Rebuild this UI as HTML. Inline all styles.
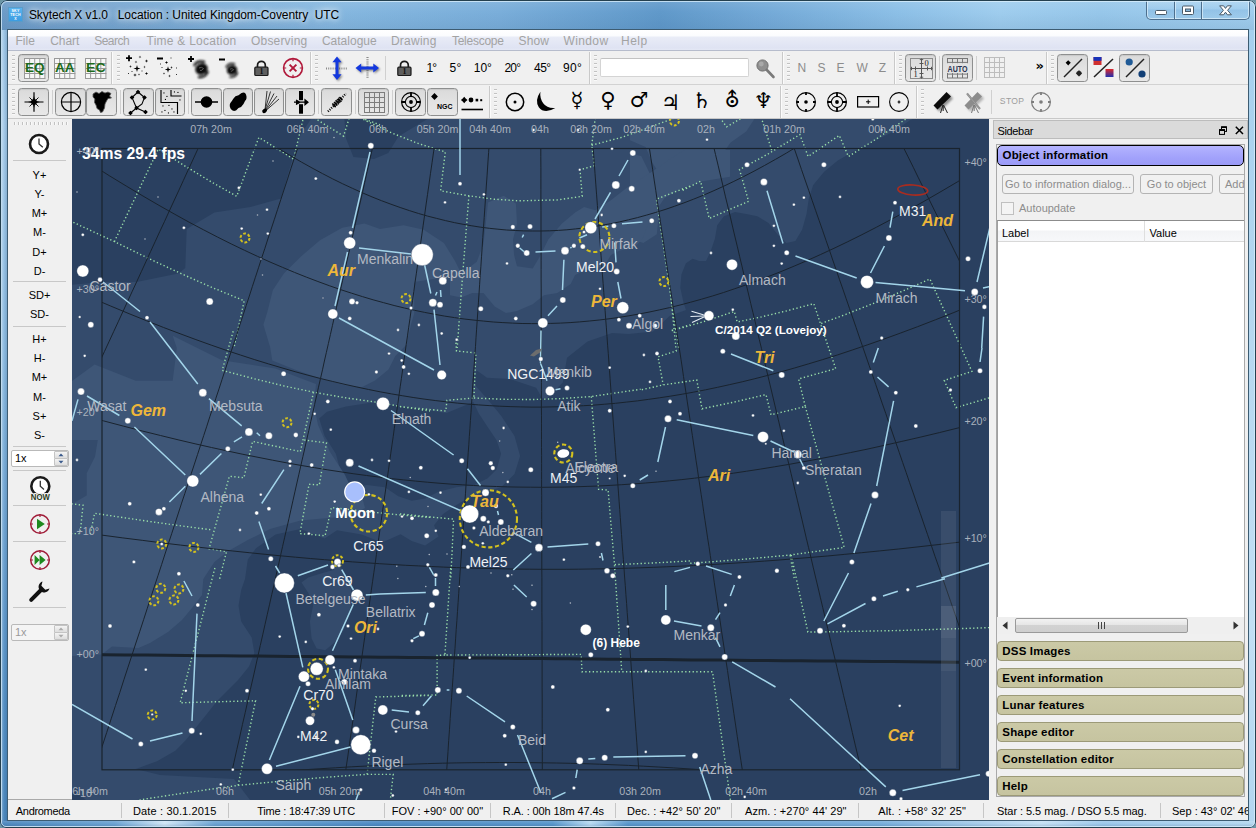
<!DOCTYPE html>
<html><head><meta charset="utf-8"><title>Skytech X v1.0</title>
<style>
*{box-sizing:border-box;margin:0;padding:0}
html,body{width:1256px;height:828px;overflow:hidden;background:#6b95a4}
body{font-family:"Liberation Sans",sans-serif;font-size:11px;color:#000;position:relative}
.abs{position:absolute}
#win{position:absolute;left:0;top:0;width:1256px;height:828px;border-radius:7px 7px 6px 6px;overflow:hidden;
 background:linear-gradient(90deg,#6c9bc7 0px,#77a7d1 120px,#86b8e0 330px,#7aaeda 500px,#6099ca 660px,#73a9d7 760px,#8dc0e7 900px,#9fcdee 1000px,#97c7ea 1100px,#a1ceee 1256px);}
#win:before{content:"";position:absolute;left:0;top:0;right:0;bottom:0;border:1px solid #24404f;border-radius:7px 7px 6px 6px;z-index:50;pointer-events:none}
#win:after{content:"";position:absolute;left:1px;top:1px;right:1px;bottom:1px;border:1px solid rgba(220,240,252,.75);border-radius:6px 6px 5px 5px;z-index:50;pointer-events:none}
#tshade{position:absolute;left:0;top:0;width:1256px;height:30px;background:linear-gradient(180deg,rgba(255,255,255,.10) 0,rgba(255,255,255,0) 12px,rgba(40,80,120,.10) 30px)}
#lframe{position:absolute;left:2px;top:30px;width:5px;height:792px;background:linear-gradient(90deg,rgba(255,255,255,.25) 0,rgba(255,255,255,0) 40%,rgba(20,60,100,.18) 100%),linear-gradient(180deg,#9ec6e6 0,#a6cbe9 12%,#8dbbe0 40%,#6ea3d1 65%,#5590c4 85%,#4c88bd 100%)}
#rframe{position:absolute;left:1249px;top:30px;width:5px;height:792px;background:linear-gradient(180deg,#a5d0ee 0,#b6d8f0 40%,#c2dff4 75%,#b2d6f0 100%)}
#bframe{position:absolute;left:2px;top:821px;width:1252px;height:5px;background:linear-gradient(180deg,rgba(255,255,255,.12) 0,rgba(255,255,255,0) 50%,rgba(10,40,80,.12) 100%),linear-gradient(90deg,#4f8abf 0,#6da4d3 9%,#cfe6f6 13%,#6da4d3 17%,#4f8cc4 30%,#5a98cc 44%,#b8daf2 47%,#5a98cc 50%,#78aedb 70%,#c4e0f4 83%,#9cc8ea 88%,#b5d8f0 100%)}
#client{position:absolute;left:7px;top:29px;width:1242px;height:792px;border:1px solid #3d5c72;background:#f0f0f0;overflow:hidden}
#cl{position:absolute;left:-8px;top:-30px;width:1256px;height:828px;}
#title{position:absolute;left:29px;top:5px;height:20px;width:400px;line-height:20px;font-size:12px;white-space:pre;color:#000;text-shadow:0 0 5px rgba(255,255,255,.9),0 0 9px rgba(255,255,255,.75),0 0 12px rgba(255,255,255,.5)}
#menubar{position:absolute;left:8px;top:30px;width:1240px;height:21px;background:linear-gradient(180deg,#ffffff 0,#fbfcfe 6px,#e9ecf7 7px,#dfe3f3 18px,#e4e8f5 20px);border-bottom:1px solid #b6bccc}
.mi{position:absolute;top:3px;height:16px;line-height:16px;font-size:12px;color:#a3a3a3;white-space:pre}
.tb{position:absolute;left:8px;width:1240px;background:#f0f0f0}
.grip{position:absolute;width:3px;background-image:repeating-linear-gradient(180deg,#bdbdbd 0,#bdbdbd 1.5px,#fafafa 1.5px,#fafafa 2.5px,transparent 2.5px,transparent 4px);opacity:.9}
.hgrip{position:absolute;height:3px;background-image:repeating-linear-gradient(90deg,#bdbdbd 0,#bdbdbd 1.5px,#fafafa 1.5px,#fafafa 2.5px,transparent 2.5px,transparent 4px);opacity:.9}
.vsep{position:absolute;width:1px;background:#c4c4c4}
.btn{position:absolute;border:1px solid #8e8f8f;border-radius:3.5px;background:linear-gradient(180deg,#dadada 0,#e2e2e2 50%,#e8e8e8 100%);box-shadow:inset 0 1px 1px rgba(0,0,0,.08)}
.ic{position:absolute;overflow:visible}
.deg{position:absolute;top:60px;font-size:12px;line-height:16px;color:#000;white-space:pre}
.dir{position:absolute;top:60px;font-size:12px;line-height:16px;color:#8c8c8c;white-space:pre}
.pl{position:absolute;font-family:"DejaVu Sans",sans-serif;color:#000;line-height:1;white-space:pre}
.lt{position:absolute;left:8px;width:63px;text-align:center;font-size:11px;line-height:13px;height:13px;color:#000;white-space:pre}
.hsep{position:absolute;left:13px;width:53px;height:1px;background:#c8c8c8}
.sbtab{position:absolute;left:997px;width:247px;height:20px;border:1px solid #9c9a78;border-radius:4px;background:linear-gradient(180deg,#cbc9a6,#c6c4a0);font-weight:bold;font-size:11.5px;letter-spacing:.18px;line-height:18px;padding-left:4.3px;white-space:pre;color:#000}
.sbtn{position:absolute;top:174px;height:20px;border:1px solid #b4b4b4;border-radius:3px;background:#f1f1f1;font-size:11px;line-height:18px;color:#8d8d8d;text-align:center;white-space:pre;overflow:hidden}
.st{position:absolute;top:802px;height:18px;line-height:18px;font-size:11px;color:#000;white-space:pre}
.ssep{position:absolute;top:803px;width:1px;height:15px;background:#c6c6c6}
</style></head>
<body>
<div id="win"><div id="tshade"></div><div id="lframe"></div><div id="rframe"></div><div id="bframe"></div>
<div class="abs" style="left:8px;top:7px;width:15px;height:15px;background:linear-gradient(180deg,#58b2ee,#3c9de2);border:1px solid #5a9cc8;overflow:hidden;text-align:center;color:#fff;font-weight:bold;font-size:3.6px;line-height:4.2px;padding-top:1px;letter-spacing:.2px">SKY<br>TECH<br>X</div>
<div id="title"><span id="cal-title" style="left:-0.1px;letter-spacing:-0.07px" class="abs">Skytech X v1.0   Location : United Kingdom-Coventry  UTC</span></div>
<div class="abs" style="left:1146px;top:0px;width:104px;height:20px;border:1px solid #4d6f8e;border-top:none;border-radius:0 0 5px 5px;background:linear-gradient(180deg,rgba(190,222,245,.55) 0,rgba(160,205,238,.35) 9px,rgba(130,180,222,.45) 10px,rgba(165,208,238,.5) 20px);box-shadow:inset 0 0 0 1px rgba(235,248,255,.6)"></div>
<div class="abs" style="left:1174px;top:1px;width:1px;height:18px;background:#4d6f8e"></div><div class="abs" style="left:1175px;top:1px;width:1px;height:18px;background:rgba(235,248,255,.6)"></div>
<div class="abs" style="left:1201px;top:1px;width:1px;height:18px;background:#4d6f8e"></div><div class="abs" style="left:1202px;top:1px;width:1px;height:18px;background:rgba(235,248,255,.6)"></div>
<svg class="ic" style="left:1150px;top:2px" width="100" height="16" viewBox="0 0 100 16"><rect x="5.5" y="8.5" width="11" height="4" rx="1" fill="#fff" stroke="#4a5a68" stroke-width="1"/><rect x="32.5" y="4" width="11" height="8.5" rx="1" fill="#fff" stroke="#4a5a68" stroke-width="1"/><rect x="35.5" y="7" width="5" height="2.5" fill="#86b4d8" stroke="#4a5a68" stroke-width="1"/><path d="M69.6 3.8 L73.6 3.8 L75.5 6.4 L77.4 3.8 L81.4 3.8 L77.6 8.3 L81.4 12.8 L77.4 12.8 L75.5 10.2 L73.6 12.8 L69.6 12.8 L73.4 8.3 Z" fill="#fff" stroke="#4a5a68" stroke-width="1" stroke-linejoin="round"/></svg>
<div id="client"><div id="cl">
<div id="menubar">
<span class="mi" id="cal-m0" style="left:7.4px;letter-spacing:0.033px">File</span>
<span class="mi" id="cal-m1" style="left:42.3px;letter-spacing:-0.1px">Chart</span>
<span class="mi" id="cal-m2" style="left:86.2px;letter-spacing:-0.52px">Search</span>
<span class="mi" id="cal-m3" style="left:138.5px;letter-spacing:0.25px">Time &amp; Location</span>
<span class="mi" id="cal-m4" style="left:243.0px;letter-spacing:0.188px">Observing</span>
<span class="mi" id="cal-m5" style="left:313.9px;letter-spacing:0.011px">Catalogue</span>
<span class="mi" id="cal-m6" style="left:382.9px;letter-spacing:0.25px">Drawing</span>
<span class="mi" id="cal-m7" style="left:443.9px;letter-spacing:-0.25px">Telescope</span>
<span class="mi" id="cal-m8" style="left:510.5px;letter-spacing:0.167px">Show</span>
<span class="mi" id="cal-m9" style="left:555.5px;letter-spacing:0.38px">Window</span>
<span class="mi" id="cal-m10" style="left:613.0px;letter-spacing:0.5px">Help</span>
</div>
<div class="tb" style="top:51px;height:34px;border-bottom:1px solid #d2d2d2"></div>
<div class="tb" style="top:85px;height:34px;border-bottom:1px solid #c8c8c8"></div><div class="grip" style="left:12px;top:55px;height:26px"></div>
<div class="btn" style="left:18px;top:54px;width:31px;height:28px"></div>
<svg class="ic" style="left:24px;top:58.2px" width="22" height="21" viewBox="0 0 22 21" ><rect x="0" y="0" width="21" height="20.5" fill="#f7f7f7"/><line x1="0.5" y1="0" x2="0.5" y2="20.5" stroke="#9a9a9a" stroke-width="1"/><line x1="0" y1="0.5" x2="21.4" y2="0.5" stroke="#9a9a9a" stroke-width="1"/><line x1="5.6" y1="0" x2="5.6" y2="20.5" stroke="#9a9a9a" stroke-width="1"/><line x1="0" y1="5.5" x2="21.4" y2="5.5" stroke="#9a9a9a" stroke-width="1"/><line x1="10.7" y1="0" x2="10.7" y2="20.5" stroke="#9a9a9a" stroke-width="1"/><line x1="0" y1="10.5" x2="21.4" y2="10.5" stroke="#9a9a9a" stroke-width="1"/><line x1="15.799999999999999" y1="0" x2="15.799999999999999" y2="20.5" stroke="#9a9a9a" stroke-width="1"/><line x1="0" y1="15.5" x2="21.4" y2="15.5" stroke="#9a9a9a" stroke-width="1"/><line x1="20.9" y1="0" x2="20.9" y2="20.5" stroke="#9a9a9a" stroke-width="1"/><line x1="0" y1="20.5" x2="21.4" y2="20.5" stroke="#9a9a9a" stroke-width="1"/><text x="10.8" y="14.3" text-anchor="middle" font-family="Liberation Sans, sans-serif" font-weight="bold" font-size="13.6" fill="#1c6b1c" textLength="19.6" lengthAdjust="spacingAndGlyphs">EQ</text></svg>
<svg class="ic" style="left:54px;top:58.2px" width="22" height="21" viewBox="0 0 22 21" ><rect x="0" y="0" width="21" height="20.5" fill="#f7f7f7"/><line x1="0.5" y1="0" x2="0.5" y2="20.5" stroke="#9a9a9a" stroke-width="1"/><line x1="0" y1="0.5" x2="21.4" y2="0.5" stroke="#9a9a9a" stroke-width="1"/><line x1="5.6" y1="0" x2="5.6" y2="20.5" stroke="#9a9a9a" stroke-width="1"/><line x1="0" y1="5.5" x2="21.4" y2="5.5" stroke="#9a9a9a" stroke-width="1"/><line x1="10.7" y1="0" x2="10.7" y2="20.5" stroke="#9a9a9a" stroke-width="1"/><line x1="0" y1="10.5" x2="21.4" y2="10.5" stroke="#9a9a9a" stroke-width="1"/><line x1="15.799999999999999" y1="0" x2="15.799999999999999" y2="20.5" stroke="#9a9a9a" stroke-width="1"/><line x1="0" y1="15.5" x2="21.4" y2="15.5" stroke="#9a9a9a" stroke-width="1"/><line x1="20.9" y1="0" x2="20.9" y2="20.5" stroke="#9a9a9a" stroke-width="1"/><line x1="0" y1="20.5" x2="21.4" y2="20.5" stroke="#9a9a9a" stroke-width="1"/><text x="10.8" y="14.3" text-anchor="middle" font-family="Liberation Sans, sans-serif" font-weight="bold" font-size="13.6" fill="#1c6b1c" textLength="19.6" lengthAdjust="spacingAndGlyphs">AA</text></svg>
<svg class="ic" style="left:85px;top:58.2px" width="22" height="21" viewBox="0 0 22 21" ><rect x="0" y="0" width="21" height="20.5" fill="#f7f7f7"/><line x1="0.5" y1="0" x2="0.5" y2="20.5" stroke="#9a9a9a" stroke-width="1"/><line x1="0" y1="0.5" x2="21.4" y2="0.5" stroke="#9a9a9a" stroke-width="1"/><line x1="5.6" y1="0" x2="5.6" y2="20.5" stroke="#9a9a9a" stroke-width="1"/><line x1="0" y1="5.5" x2="21.4" y2="5.5" stroke="#9a9a9a" stroke-width="1"/><line x1="10.7" y1="0" x2="10.7" y2="20.5" stroke="#9a9a9a" stroke-width="1"/><line x1="0" y1="10.5" x2="21.4" y2="10.5" stroke="#9a9a9a" stroke-width="1"/><line x1="15.799999999999999" y1="0" x2="15.799999999999999" y2="20.5" stroke="#9a9a9a" stroke-width="1"/><line x1="0" y1="15.5" x2="21.4" y2="15.5" stroke="#9a9a9a" stroke-width="1"/><line x1="20.9" y1="0" x2="20.9" y2="20.5" stroke="#9a9a9a" stroke-width="1"/><line x1="0" y1="20.5" x2="21.4" y2="20.5" stroke="#9a9a9a" stroke-width="1"/><text x="10.8" y="14.3" text-anchor="middle" font-family="Liberation Sans, sans-serif" font-weight="bold" font-size="13.6" fill="#1c6b1c" textLength="19.6" lengthAdjust="spacingAndGlyphs">EC</text></svg>
<div class="vsep" style="left:111px;top:52px;height:32px;background:#c9c9c9"></div><div class="vsep" style="left:112px;top:52px;height:32px;background:#fbfbfb"></div>
<div class="grip" style="left:117px;top:55px;height:26px"></div>
<svg class="ic" style="left:126px;top:55.3px" width="23" height="23" viewBox="0 0 23 23" ><path d="M0 3.2 H6 M3 0.2 V6.2" stroke="#000" stroke-width="1.8"/><path d="M14 0.3999999999999999 L14.352 1.648 L15.6 2 L14.352 2.352 L14 3.6 L13.648 2.352 L12.4 2 L13.648 1.648 Z" fill="#000"/><path d="M10 5.4 L10.352 6.648 L11.6 7 L10.352 7.352 L10 8.6 L9.648 7.352 L8.4 7 L9.648 6.648 Z" fill="#000"/><path d="M20.5 4.2 L20.896 5.604 L22.3 6 L20.896 6.396 L20.5 7.8 L20.104 6.396 L18.7 6 L20.104 5.604 Z" fill="#000"/><path d="M4.5 9.9 L4.852 11.148 L6.1 11.5 L4.852 11.852 L4.5 13.1 L4.148 11.852 L2.9 11.5 L4.148 11.148 Z" fill="#000"/><path d="M11 9.9 L11.792 12.708 L14.6 13.5 L11.792 14.292 L11 17.1 L10.208 14.292 L7.4 13.5 L10.208 12.708 Z" fill="#000"/><path d="M18.5 10.6 L18.808 11.692 L19.9 12 L18.808 12.308 L18.5 13.4 L18.192 12.308 L17.1 12 L18.192 11.692 Z" fill="#000"/><path d="M9 18.2 L9.396 19.604 L10.8 20 L9.396 20.396 L9 21.8 L8.604 20.396 L7.2 20 L8.604 19.604 Z" fill="#000"/><path d="M20.5 16.7 L20.896 18.104 L22.3 18.5 L20.896 18.896 L20.5 20.3 L20.104 18.896 L18.7 18.5 L20.104 18.104 Z" fill="#000"/><path d="M13 18.3 L13.264 19.236 L14.2 19.5 L13.264 19.764 L13 20.7 L12.736 19.764 L11.8 19.5 L12.736 19.236 Z" fill="#000"/><rect x="2.0" y="18.0" width="1" height="1" fill="#333"/><rect x="15.5" y="15.5" width="1" height="1" fill="#333"/><rect x="5.5" y="16.0" width="1" height="1" fill="#333"/></svg>
<svg class="ic" style="left:157px;top:56px" width="23" height="23" viewBox="0 0 23 23" ><path d="M0 2.5 H6" stroke="#000" stroke-width="1.8"/><path d="M9.5 4.7 L9.896 6.104 L11.3 6.5 L9.896 6.896 L9.5 8.3 L9.104 6.896 L7.7 6.5 L9.104 6.104 Z" fill="#000"/><path d="M11 10.3 L11.704 12.796 L14.2 13.5 L11.704 14.204 L11 16.7 L10.296 14.204 L7.8 13.5 L10.296 12.796 Z" fill="#000"/><path d="M14.5 10.0 L14.83 11.17 L16.0 11.5 L14.83 11.83 L14.5 13.0 L14.17 11.83 L13.0 11.5 L14.17 11.17 Z" fill="#000"/><path d="M7 16.2 L7.286 17.214 L8.3 17.5 L7.286 17.786 L7 18.8 L6.714 17.786 L5.7 17.5 L6.714 17.214 Z" fill="#000"/><path d="M12.5 18.4 L12.852 19.648 L14.1 20 L12.852 20.352 L12.5 21.6 L12.148 20.352 L10.9 20 L12.148 19.648 Z" fill="#000"/><rect x="13.5" y="1.5" width="1" height="1" fill="#333"/><rect x="4.5" y="11.0" width="1" height="1" fill="#333"/><rect x="19.0" y="11.5" width="1" height="1" fill="#333"/><rect x="19.0" y="18.0" width="1" height="1" fill="#333"/><rect x="3.0" y="7.5" width="1" height="1" fill="#333"/></svg>
<svg class="ic" style="left:188px;top:56px" width="23" height="23" viewBox="0 0 23 23" ><defs><filter id="gbp" x="-50%" y="-50%" width="200%" height="200%"><feGaussianBlur stdDeviation="0.9"/></filter></defs><path d="M0 3 H6 M3 0 V6" stroke="#000" stroke-width="1.8"/><g filter="url(#gbp)"><ellipse cx="13.5" cy="13" rx="6.4" ry="5.6" fill="#0a0a0a" transform="rotate(-25 13.5 13)"/><path d="M6 10 Q9 3.5 17 6" stroke="#111" stroke-width="2.2" fill="none"/><path d="M20 15 Q18 22 10 21" stroke="#111" stroke-width="2.2" fill="none"/></g><path d="M11 12 Q13.5 10.5 15.5 12.5 Q14 15 12 14.5" stroke="#666" stroke-width="1" fill="none" opacity=".8"/></svg>
<svg class="ic" style="left:218.5px;top:56.5px" width="23" height="23" viewBox="0 0 23 23" ><defs><filter id="gbm" x="-50%" y="-50%" width="200%" height="200%"><feGaussianBlur stdDeviation="0.9"/></filter></defs><path d="M0 2.5 H6" stroke="#000" stroke-width="1.8"/><g filter="url(#gbm)"><ellipse cx="13" cy="13" rx="5.3" ry="4.7" fill="#0a0a0a" transform="rotate(-25 13 13)"/><path d="M7 10.5 Q10 5 16 7.2" stroke="#111" stroke-width="1.8" fill="none"/><path d="M18.5 15 Q17 20.5 10.5 19.8" stroke="#111" stroke-width="1.8" fill="none"/></g><path d="M11 12.2 Q13 11 14.6 12.6 Q13.4 14.6 11.8 14.2" stroke="#666" stroke-width="1" fill="none" opacity=".8"/></svg>
<svg class="ic" style="left:254.3px;top:59.7px" width="15" height="16" viewBox="0 0 15 16" ><path d="M3.5 7.5 V5.2 A3.9 3.9 0 0 1 11.3 5.2 V7.5" fill="none" stroke="#1a1a1a" stroke-width="1.7"/><rect x="0.8" y="7.2" width="13.2" height="8.3" rx="1" fill="#5f5f5f" stroke="#1a1a1a" stroke-width="1.2"/><text x="7.4" y="14.4" text-anchor="middle" font-family="Liberation Serif, serif" font-weight="bold" font-size="8" fill="#111">1</text></svg>
<svg class="ic" style="left:281.8px;top:57px" width="22" height="22" viewBox="0 0 22 22" ><circle cx="11" cy="11" r="9.4" fill="none" stroke="#b0183a" stroke-width="1.6"/><path d="M7.6 7.6 L14.4 14.4 M14.4 7.6 L7.6 14.4" stroke="#b0183a" stroke-width="1.9"/><path d="M11 2 V4.2 M11 17.8 V20 M2 11 H4.2 M17.8 11 H20" stroke="#b0183a" stroke-width="1.2"/></svg>
<div class="vsep" style="left:310px;top:52px;height:32px;background:#c9c9c9"></div><div class="vsep" style="left:311px;top:52px;height:32px;background:#fbfbfb"></div>
<div class="grip" style="left:315px;top:55px;height:26px"></div>
<svg class="ic" style="left:324.8px;top:56.2px" width="24" height="25" viewBox="0 0 24 25" ><defs><filter id="ash" x="-50%" y="-50%" width="200%" height="200%"><feGaussianBlur stdDeviation="0.8"/></filter></defs><path d="M1 12.5 H23" stroke="#8a8a8a" stroke-width="2.2" stroke-dasharray="1 1.2"/><path d="M12 0.5 L16.6 6.2 L13.5 6.2 L13.5 18.3 L16.6 18.3 L12 24 L7.4 18.3 L10.5 18.3 L10.5 6.2 L7.4 6.2 Z" fill="#000" opacity=".45" transform="translate(1.2 1.2)" filter="url(#ash)"/><path d="M12 0.5 L16.6 6.2 L13.5 6.2 L13.5 18.3 L16.6 18.3 L12 24 L7.4 18.3 L10.5 18.3 L10.5 6.2 L7.4 6.2 Z" fill="#1338de"/></svg>
<svg class="ic" style="left:355.2px;top:55.8px" width="25" height="24" viewBox="0 0 25 24" ><path d="M12.5 1 V23" stroke="#8a8a8a" stroke-width="2.2" stroke-dasharray="1 1.2"/><path d="M0.5 12 L6.2 7.4 L6.2 10.5 L18.3 10.5 L18.3 7.4 L24 12 L18.3 16.6 L18.3 13.5 L6.2 13.5 L6.2 16.6 Z" fill="#000" opacity=".45" transform="translate(1.2 1.2)" filter="url(#ash)"/><path d="M0.5 12 L6.2 7.4 L6.2 10.5 L18.3 10.5 L18.3 7.4 L24 12 L18.3 16.6 L18.3 13.5 L6.2 13.5 L6.2 16.6 Z" fill="#1338de"/></svg>
<div class="vsep" style="left:385px;top:56px;height:24px;background:#d0d0d0"></div>
<svg class="ic" style="left:396.8px;top:59.9px" width="15" height="16" viewBox="0 0 15 16" ><path d="M3.5 7.5 V5.2 A3.9 3.9 0 0 1 11.3 5.2 V7.5" fill="none" stroke="#1a1a1a" stroke-width="1.7"/><rect x="0.8" y="7.2" width="13.2" height="8.3" rx="1" fill="#5f5f5f" stroke="#1a1a1a" stroke-width="1.2"/><text x="7.4" y="14.4" text-anchor="middle" font-family="Liberation Serif, serif" font-weight="bold" font-size="8" fill="#111">1</text></svg>
<span class="deg" id="cal-d0" style="left:426.4px;letter-spacing:-0.8px">1°</span>
<span class="deg" id="cal-d1" style="left:449.4px;letter-spacing:0.5px">5°</span>
<span class="deg" id="cal-d2" style="left:473.8px;letter-spacing:-0.05px">10°</span>
<span class="deg" id="cal-d3" style="left:504.4px;letter-spacing:-0.8px">20°</span>
<span class="deg" id="cal-d4" style="left:534.0px;letter-spacing:-0.5px">45°</span>
<span class="deg" id="cal-d5" style="left:563.1px;letter-spacing:0.25px">90°</span>
<div class="vsep" style="left:589px;top:52px;height:32px;background:#c9c9c9"></div><div class="vsep" style="left:590px;top:52px;height:32px;background:#fbfbfb"></div>
<div class="grip" style="left:594px;top:55px;height:26px"></div>
<div class="abs" style="left:600px;top:58px;width:149px;height:19px;background:#fff;border:1px solid #d4d4d4;border-top-color:#c2c2c2;border-radius:2px"></div>
<svg class="ic" style="left:755.5px;top:58.5px" width="20" height="20" viewBox="0 0 20 20" ><defs><filter id="mgb"><feGaussianBlur stdDeviation="0.5"/></filter></defs><g filter="url(#mgb)"><path d="M9 9 L17.5 18" stroke="#7a7a7a" stroke-width="2.6" stroke-linecap="round"/><circle cx="6.5" cy="6.5" r="5.6" fill="#8f8f8f" stroke="#6e6e6e" stroke-width="1"/><circle cx="5.3" cy="5" r="2.4" fill="#a9a9a9"/></g></svg>
<div class="vsep" style="left:782px;top:52px;height:32px;background:#c9c9c9"></div><div class="vsep" style="left:783px;top:52px;height:32px;background:#fbfbfb"></div>
<div class="grip" style="left:787px;top:55px;height:26px"></div>
<span class="dir" id="cal-n0" style="left:797.4px;letter-spacing:0px">N</span>
<span class="dir" id="cal-n1" style="left:817.4px;letter-spacing:0px">S</span>
<span class="dir" id="cal-n2" style="left:836.6px;letter-spacing:0px">E</span>
<span class="dir" id="cal-n3" style="left:856.4px;letter-spacing:0px">W</span>
<span class="dir" id="cal-n4" style="left:878.8px;letter-spacing:0px">Z</span>
<div class="vsep" style="left:894px;top:52px;height:32px;background:#c9c9c9"></div><div class="vsep" style="left:895px;top:52px;height:32px;background:#fbfbfb"></div>
<div class="grip" style="left:899px;top:55px;height:26px"></div>
<div class="btn" style="left:905px;top:54px;width:31px;height:28px"></div>
<svg class="ic" style="left:909.5px;top:58px" width="23" height="21" viewBox="0 0 23 21" ><rect x="0.5" y="0.5" width="22" height="20" fill="none" stroke="#8c8c8c"/><path d="M11.5 0.5 V20.5 M0.5 10.5 H22.5" stroke="#555" stroke-width="1"/><path d="M9.5 5.5 H13.5 M9.5 15.5 H13.5 M5.5 8.5 V12.5 M17.5 8.5 V12.5 M1.5 8.8 V12.2 M21.5 8.8 V12.2 M9.8 19.2 H13.2 M9.8 1.6 H13.2" stroke="#555" stroke-width="1"/><text x="16.5" y="8.3" text-anchor="middle" font-family="Liberation Serif,serif" font-size="8.5" fill="#222">0</text><text x="5.6" y="19" text-anchor="middle" font-family="Liberation Serif,serif" font-size="8.5" fill="#222">1</text></svg>
<div class="vsep" style="left:938.5px;top:56px;height:24px;background:#d0d0d0"></div>
<div class="btn" style="left:942px;top:54px;width:31px;height:28px"></div>
<svg class="ic" style="left:947px;top:57.5px" width="21" height="21" viewBox="0 0 21 21" ><line x1="0.5" y1="0" x2="0.5" y2="20" stroke="#777" stroke-width="1"/><line x1="5.5" y1="0" x2="5.5" y2="20" stroke="#777" stroke-width="1"/><line x1="10.5" y1="0" x2="10.5" y2="20" stroke="#777" stroke-width="1"/><line x1="15.5" y1="0" x2="15.5" y2="20" stroke="#777" stroke-width="1"/><line x1="20.5" y1="0" x2="20.5" y2="20" stroke="#777" stroke-width="1"/><line x1="0" y1="0.5" x2="21" y2="0.5" stroke="#777" stroke-width="1"/><line x1="0" y1="4.4" x2="21" y2="4.4" stroke="#777" stroke-width="1"/><line x1="0" y1="8.3" x2="21" y2="8.3" stroke="#777" stroke-width="1"/><line x1="0" y1="12.2" x2="21" y2="12.2" stroke="#777" stroke-width="1"/><line x1="0" y1="16.1" x2="21" y2="16.1" stroke="#777" stroke-width="1"/><line x1="0" y1="20.0" x2="21" y2="20.0" stroke="#777" stroke-width="1"/><rect x="-1" y="5.2" width="23" height="9.8" fill="#e2e2e2"/><text x="10.5" y="13.6" text-anchor="middle" font-family="Liberation Sans,sans-serif" font-weight="bold" font-size="9.4" fill="#2a3350" textLength="20" lengthAdjust="spacingAndGlyphs">AUTO</text></svg>
<div class="vsep" style="left:975.5px;top:56px;height:24px;background:#d0d0d0"></div>
<svg class="ic" style="left:984px;top:57px" width="21" height="21" viewBox="0 0 21 21" ><line x1="0.5" y1="0" x2="0.5" y2="21" stroke="#bdbdbd" stroke-width="1"/><line x1="0" y1="0.5" x2="21" y2="0.5" stroke="#bdbdbd" stroke-width="1"/><line x1="5.5" y1="0" x2="5.5" y2="21" stroke="#bdbdbd" stroke-width="1"/><line x1="0" y1="5.5" x2="21" y2="5.5" stroke="#bdbdbd" stroke-width="1"/><line x1="10.5" y1="0" x2="10.5" y2="21" stroke="#bdbdbd" stroke-width="1"/><line x1="0" y1="10.5" x2="21" y2="10.5" stroke="#bdbdbd" stroke-width="1"/><line x1="15.5" y1="0" x2="15.5" y2="21" stroke="#bdbdbd" stroke-width="1"/><line x1="0" y1="15.5" x2="21" y2="15.5" stroke="#bdbdbd" stroke-width="1"/><line x1="20.5" y1="0" x2="20.5" y2="21" stroke="#bdbdbd" stroke-width="1"/><line x1="0" y1="20.5" x2="21" y2="20.5" stroke="#bdbdbd" stroke-width="1"/></svg>
<span class="abs" style="left:1035.5px;top:58px;font-size:15px;line-height:16px;font-weight:bold;color:#000;letter-spacing:-1px;font-family:DejaVu Sans,sans-serif;font-size:13px">»</span>
<div class="vsep" style="left:1046px;top:52px;height:32px;background:#c9c9c9"></div><div class="vsep" style="left:1047px;top:52px;height:32px;background:#fbfbfb"></div>
<div class="grip" style="left:1051px;top:55px;height:26px"></div>
<div class="btn" style="left:1057px;top:54px;width:31px;height:28px"></div>
<svg class="ic" style="left:1060.5px;top:56px" width="24" height="24" viewBox="0 0 24 24" ><path d="M3 21 L21 3" stroke="#222" stroke-width="1.5"/><path d="M7.2 4.199999999999999 L8.5 5.5 L9.8 6.8 L8.5 8.1 L7.2 9.4 L5.9 8.1 L4.6 6.8 L5.9 5.5 Z" fill="#000"/><defs><filter id="dsb"><feGaussianBlur stdDeviation="0.5"/></filter></defs><g filter="url(#dsb)"><path d="M18 14.200000000000001 L19.705000000000002 15.595 L21.1 17.3 L19.705000000000002 19.005000000000003 L18 20.400000000000002 L16.294999999999998 19.005000000000003 L14.9 17.3 L16.294999999999998 15.595 Z" fill="#222"/></g></svg>
<svg class="ic" style="left:1092.5px;top:56px" width="22" height="24" viewBox="0 0 22 24" ><path d="M1 21 L20 3" stroke="#222" stroke-width="1.5"/><rect x="0.5" y="1" width="8" height="8" fill="#d03030"/><rect x="0.5" y="1" width="8" height="3.8" fill="#1832b8"/><defs><linearGradient id="rbg" x1="0" y1="0" x2="0" y2="1"><stop offset="0" stop-color="#e02828"/><stop offset="1" stop-color="#2030b0"/></linearGradient></defs><rect x="12.5" y="13" width="8" height="8" fill="url(#rbg)"/></svg>
<div class="btn" style="left:1119px;top:54px;width:31px;height:28px"></div>
<svg class="ic" style="left:1122.5px;top:56px" width="24" height="24" viewBox="0 0 24 24" ><path d="M3 21 L21 3" stroke="#222" stroke-width="1.5"/><circle cx="6.2" cy="6" r="3.6" fill="#1f5a96"/><circle cx="19" cy="18" r="3.6" fill="#123f76"/></svg>
<div class="grip" style="left:12px;top:89px;height:26px"></div>
<div class="btn" style="left:18px;top:88px;width:31px;height:28px"></div>
<svg class="ic" style="left:22.5px;top:91px" width="22" height="22" viewBox="0 0 22 22" ><path d="M11 1.2 V20.8 M1.5 11 H20.5" stroke="#000" stroke-width="1.2"/><path d="M6.5 6.5 L15.5 15.5 M15.5 6.5 L6.5 15.5" stroke="#000" stroke-width="0.9"/><path d="M11 5 L12.32 9.68 L17 11 L12.32 12.32 L11 17 L9.68 12.32 L5 11 L9.68 9.68 Z" fill="#000"/><circle cx="11" cy="11" r="2.9" fill="#000"/></svg>
<div class="vsep" style="left:51.5px;top:90px;height:24px;background:#d0d0d0"></div>
<div class="btn" style="left:55px;top:88px;width:31px;height:28px"></div>
<svg class="ic" style="left:59.5px;top:91px" width="22" height="22" viewBox="0 0 22 22" ><circle cx="11" cy="11" r="9.6" fill="none" stroke="#000" stroke-width="1.2"/><path d="M11 1 V21 M1 11 H21" stroke="#000" stroke-width="1.2"/></svg>
<div class="btn" style="left:86px;top:88px;width:31px;height:28px"></div>
<svg class="ic" style="left:90px;top:90px" width="23" height="24" viewBox="0 0 23 24" ><path d="M3 4 L6 2 L9 3.5 L12 1.5 L15 3 L18 2 L21 3.5 L19.5 6 L21.5 8 L18 8.5 L16.5 11 L15 14 L14.5 18 L12.5 22 L10.5 22.5 L9.5 20 L7 18.5 L6 15 L4.5 12.5 L4.8 9 L3 7 Z" fill="#000" stroke="#555" stroke-width="0.8"/></svg>
<div class="vsep" style="left:120px;top:90px;height:24px;background:#d0d0d0"></div>
<div class="btn" style="left:123px;top:88px;width:30.5px;height:28px"></div>
<svg class="ic" style="left:129px;top:89.5px" width="19" height="25" viewBox="0 0 19 25" ><path d="M9 2 L15.5 7.5 L13 14 L7.5 18 L1.5 23 M9 2 L3 7.5 L7.5 18 L16.5 22" fill="none" stroke="#000" stroke-width="1.05"/><path d="M9 -0.2999999999999998 L10.15 0.8500000000000001 L11.3 2 L10.15 3.15 L9 4.3 L7.85 3.15 L6.7 2 L7.85 0.8500000000000001 Z" fill="#000"/><path d="M15.5 5.2 L16.65 6.35 L17.8 7.5 L16.65 8.65 L15.5 9.8 L14.35 8.65 L13.2 7.5 L14.35 6.35 Z" fill="#000"/><path d="M3 5.2 L4.15 6.35 L5.3 7.5 L4.15 8.65 L3 9.8 L1.85 8.65 L0.7000000000000002 7.5 L1.85 6.35 Z" fill="#000"/><path d="M7.5 15.7 L8.65 16.85 L9.8 18 L8.65 19.15 L7.5 20.3 L6.35 19.15 L5.2 18 L6.35 16.85 Z" fill="#000"/><path d="M1.5 20.7 L2.65 21.85 L3.8 23 L2.65 24.15 L1.5 25.3 L0.3500000000000001 24.15 L-0.7999999999999998 23 L0.3500000000000001 21.85 Z" fill="#000"/><path d="M16.5 19.7 L17.65 20.85 L18.8 22 L17.65 23.15 L16.5 24.3 L15.35 23.15 L14.2 22 L15.35 20.85 Z" fill="#000"/></svg>
<div class="btn" style="left:154.5px;top:88px;width:30.5px;height:28px"></div>
<svg class="ic" style="left:159.5px;top:90px" width="22" height="24" viewBox="0 0 22 24" ><path d="M1 0 V12.5 H17.5 V24 M11 0 V6 H21.5" fill="none" stroke="#000" stroke-width="1.15"/><rect x="3.4" y="2.4" width="1.1" height="1.1" fill="#000"/><rect x="6.4" y="5.9" width="1.1" height="1.1" fill="#000"/><rect x="4.9" y="8.9" width="1.1" height="1.1" fill="#000"/><rect x="13.9" y="1.4" width="1.1" height="1.1" fill="#000"/><rect x="17.4" y="1.9" width="1.1" height="1.1" fill="#000"/><rect x="19.4" y="9.4" width="1.1" height="1.1" fill="#000"/><rect x="2.4" y="15.4" width="1.1" height="1.1" fill="#000"/><rect x="8.4" y="14.9" width="1.1" height="1.1" fill="#000"/><rect x="11.4" y="18.4" width="1.1" height="1.1" fill="#000"/><rect x="4.4" y="19.9" width="1.1" height="1.1" fill="#000"/><rect x="13.4" y="21.4" width="1.1" height="1.1" fill="#000"/><rect x="7.9" y="22.4" width="1.1" height="1.1" fill="#000"/><rect x="1.4" y="21.4" width="1.1" height="1.1" fill="#000"/></svg>
<div class="vsep" style="left:188px;top:90px;height:24px;background:#d0d0d0"></div>
<div class="btn" style="left:191px;top:88px;width:30.5px;height:28px"></div>
<svg class="ic" style="left:195px;top:95px" width="23" height="14" viewBox="0 0 23 14" ><path d="M0 7 H23" stroke="#000" stroke-width="1.3"/><circle cx="11.5" cy="7" r="5.8" fill="#000"/></svg>
<div class="btn" style="left:222.5px;top:88px;width:30.5px;height:28px"></div>
<svg class="ic" style="left:228.8px;top:92.3px" width="19" height="20" viewBox="0 0 19 20" ><path d="M1.5 16.5 Q-0.5 12.5 2.5 9.5 L4.5 6.5 Q6 3.5 9.5 3.2 L12.5 1 Q16 -0.5 17 2.5 Q18.5 6.5 16 9 L14.5 12 Q12.5 15.5 9.5 16 L7 18.5 Q3.5 20 1.5 16.5 Z" fill="#000"/></svg>
<div class="btn" style="left:253.5px;top:88px;width:30.5px;height:28px"></div>
<svg class="ic" style="left:261px;top:91px" width="19" height="23" viewBox="0 0 19 23" ><path d="M4 19 L6 0 M4 19 L9.5 0.5 M4.5 19 L13 2.5 M5 19 L16 5 M5 19.5 L18 8" stroke="#222" stroke-width="0.9" fill="none"/><ellipse cx="3.6" cy="19.8" rx="2.6" ry="2" fill="#000" transform="rotate(-35 3.6 19.8)"/></svg>
<div class="btn" style="left:284.5px;top:88px;width:30.5px;height:28px"></div>
<svg class="ic" style="left:291.5px;top:91px" width="18" height="23" viewBox="0 0 18 23" ><rect x="7" y="0" width="4" height="9.2" fill="#000"/><rect x="7" y="13.2" width="4" height="9.5" fill="#000"/><path d="M2 11.2 H15.5 M4 9 L8 11.2 L4 13.5 M13 8.8 V13.8 L16 11.2 Z" stroke="#000" stroke-width="1.2" fill="#000"/></svg>
<div class="vsep" style="left:318px;top:90px;height:24px;background:#d0d0d0"></div>
<div class="btn" style="left:321px;top:88px;width:31px;height:28px"></div>
<svg class="ic" style="left:326.5px;top:91px" width="20" height="22" viewBox="0 0 20 22" ><defs><filter id="mwb"><feGaussianBlur stdDeviation="0.35"/></filter></defs><path d="M1 20.5 L19 2.5" stroke="#000" stroke-width="2.2" stroke-dasharray="1 1.3"/><g filter="url(#mwb)"><path d="M6.5 15 L14.5 7" stroke="#000" stroke-width="4.2" stroke-dasharray="1.6 0.8"/><path d="M8 16 L15.5 9 M5.5 13 L12.5 6.5" stroke="#000" stroke-width="1.2" stroke-dasharray="1 1"/></g></svg>
<div class="vsep" style="left:355px;top:90px;height:24px;background:#d0d0d0"></div>
<div class="btn" style="left:358px;top:88px;width:31px;height:28px"></div>
<svg class="ic" style="left:363.5px;top:92px" width="21" height="21" viewBox="0 0 21 21" ><line x1="0.5" y1="0" x2="0.5" y2="21" stroke="#7d7d7d" stroke-width="1"/><line x1="0" y1="0.5" x2="21" y2="0.5" stroke="#7d7d7d" stroke-width="1"/><line x1="5.5" y1="0" x2="5.5" y2="21" stroke="#7d7d7d" stroke-width="1"/><line x1="0" y1="5.5" x2="21" y2="5.5" stroke="#7d7d7d" stroke-width="1"/><line x1="10.5" y1="0" x2="10.5" y2="21" stroke="#7d7d7d" stroke-width="1"/><line x1="0" y1="10.5" x2="21" y2="10.5" stroke="#7d7d7d" stroke-width="1"/><line x1="15.5" y1="0" x2="15.5" y2="21" stroke="#7d7d7d" stroke-width="1"/><line x1="0" y1="15.5" x2="21" y2="15.5" stroke="#7d7d7d" stroke-width="1"/><line x1="20.5" y1="0" x2="20.5" y2="21" stroke="#7d7d7d" stroke-width="1"/><line x1="0" y1="20.5" x2="21" y2="20.5" stroke="#7d7d7d" stroke-width="1"/></svg>
<div class="vsep" style="left:392px;top:90px;height:24px;background:#d0d0d0"></div>
<div class="btn" style="left:395px;top:88px;width:31px;height:28px"></div>
<svg class="ic" style="left:399.5px;top:91px" width="22" height="22" viewBox="0 0 22 22" ><circle cx="11" cy="11" r="9.4" fill="none" stroke="#000" stroke-width="1.2"/><circle cx="11" cy="11" r="5.6" fill="none" stroke="#000" stroke-width="1.1"/><circle cx="11" cy="11" r="1.9" fill="#000"/><path d="M11 1.5 V5 M11 17 V20.5 M1.5 11 H5 M17 11 H20.5" stroke="#000" stroke-width="1.8"/></svg>
<div class="btn" style="left:426.5px;top:88px;width:31px;height:28px"></div>
<svg class="ic" style="left:430.5px;top:93px" width="23" height="17" viewBox="0 0 23 17" ><path d="M3.5 0.10000000000000009 L5.2 1.8 L6.9 3.5 L5.2 5.2 L3.5 6.9 L1.8 5.2 L0.10000000000000009 3.5 L1.8 1.8 Z" fill="#000"/><text x="6" y="15.5" font-family="Liberation Sans,sans-serif" font-weight="bold" font-size="7.6" fill="#000" textLength="15.5" lengthAdjust="spacingAndGlyphs">NGC</text></svg>
<svg class="ic" style="left:460.5px;top:95.5px" width="23" height="16" viewBox="0 0 23 16" ><path d="M3.2 0.7000000000000002 L4.6850000000000005 2.515 L6.5 4 L4.6850000000000005 5.484999999999999 L3.2 7.3 L1.7150000000000003 5.484999999999999 L-0.09999999999999964 4 L1.7150000000000003 2.515 Z" fill="#000"/><circle cx="10" cy="4" r="2.4" fill="#000"/><rect x="14.6" y="2.8" width="2.6" height="2.6" fill="#000"/><rect x="19.2" y="3.2" width="2" height="2" fill="#000"/><path d="M0.5 13.5 H22" stroke="#000" stroke-width="1.6"/></svg>
<div class="vsep" style="left:489px;top:86px;height:32px;background:#c9c9c9"></div><div class="vsep" style="left:490px;top:86px;height:32px;background:#fbfbfb"></div>
<div class="grip" style="left:494px;top:89px;height:26px"></div>
<svg class="ic" style="left:505.4px;top:91.8px" width="20" height="20" viewBox="0 0 20 20" ><circle cx="10" cy="10" r="8.7" fill="none" stroke="#000" stroke-width="1.5"/><circle cx="10" cy="10" r="1.5" fill="#000"/></svg>
<svg class="ic" style="left:535px;top:91px" width="22" height="22" viewBox="0 0 22 22" ><path d="M5.4 0.8 Q-0.5 9.5 3.8 16.2 Q9.5 23.5 20.3 17 Q12.2 17.8 8.2 12.3 Q4.6 7.2 5.4 0.8 Z" fill="#000"/></svg>
<span class="pl" style="left:562px;top:89.7px;width:30px;text-align:center;font-size:21px">☿</span>
<span class="pl" style="left:592.9px;top:89.7px;width:30px;text-align:center;font-size:21px">♀</span>
<span class="pl" style="left:623.8px;top:89.9px;width:30px;text-align:center;font-size:21px">♂</span>
<span class="pl" style="left:655.6px;top:91.7px;width:30px;text-align:center;font-size:21.5px">♃</span>
<span class="pl" style="left:686.7px;top:89.7px;width:30px;text-align:center;font-size:21.5px">♄</span>
<span class="pl" style="left:717.2px;top:89.7px;width:30px;text-align:center;font-size:21px">⛢</span>
<span class="pl" style="left:748.5px;top:89.7px;width:30px;text-align:center;font-size:21.5px">♆</span>
<div class="vsep" style="left:780px;top:86px;height:32px;background:#c9c9c9"></div><div class="vsep" style="left:781px;top:86px;height:32px;background:#fbfbfb"></div>
<div class="grip" style="left:785px;top:89px;height:26px"></div>
<svg class="ic" style="left:795.2px;top:90.8px" width="22" height="22" viewBox="0 0 22 22" ><circle cx="11" cy="11" r="9.4" fill="none" stroke="#000" stroke-width="1.2"/><circle cx="11" cy="11" r="1.8" fill="#000"/><path d="M11 1.5 V4 M11 18 V20.5 M1.5 11 H4 M18 11 H20.5" stroke="#000" stroke-width="1.8"/></svg>
<svg class="ic" style="left:826.2px;top:90.8px" width="22" height="22" viewBox="0 0 22 22" ><circle cx="11" cy="11" r="9.4" fill="none" stroke="#000" stroke-width="1.2"/><circle cx="11" cy="11" r="5.6" fill="none" stroke="#000" stroke-width="1.1"/><circle cx="11" cy="11" r="1.9" fill="#000"/><path d="M11 1.5 V5 M11 17 V20.5 M1.5 11 H5 M17 11 H20.5" stroke="#000" stroke-width="1.8"/></svg>
<svg class="ic" style="left:857px;top:95.5px" width="23" height="12" viewBox="0 0 23 12" ><rect x="0.6" y="0.6" width="21" height="10.4" fill="none" stroke="#000" stroke-width="1.2"/><path d="M9 5.8 H13.4 M11.2 3.6 V8" stroke="#000" stroke-width="1"/></svg>
<svg class="ic" style="left:888px;top:90.8px" width="22" height="22" viewBox="0 0 22 22" ><circle cx="11" cy="11" r="9.4" fill="none" stroke="#000" stroke-width="1.1"/><path d="M9.6 11 H12.4 M11 9.6 V12.4" stroke="#000" stroke-width="1.1"/></svg>
<div class="vsep" style="left:916px;top:86px;height:32px;background:#c9c9c9"></div><div class="vsep" style="left:917px;top:86px;height:32px;background:#fbfbfb"></div>
<div class="grip" style="left:921px;top:89px;height:26px"></div>
<svg class="ic" style="left:931.5px;top:90.7px" width="22" height="23" viewBox="0 0 22 23" ><defs><filter id="scb0" x="-30%" y="-30%" width="160%" height="160%"><feGaussianBlur stdDeviation="0.9"/></filter></defs><path d="M2 15 L15 1.5 L19.5 6 L6 19 Z" fill="#000" opacity="0.4" transform="translate(1.5 1.5)" filter="url(#scb0)"/><path d="M11 14 L8.5 22 M11.5 14 L15.5 22 M11.2 14 V20" stroke="#222" stroke-width="1"/><path d="M1.5 14.5 L14.5 1 L19 5.5 L5.5 18.5 Z" fill="#0c0c0c"/></svg>
<svg class="ic" style="left:962.5px;top:90.7px" width="22" height="23" viewBox="0 0 22 23" ><defs><filter id="scb1" x="-30%" y="-30%" width="160%" height="160%"><feGaussianBlur stdDeviation="0.9"/></filter></defs><path d="M2 15 L15 1.5 L19.5 6 L6 19 Z" fill="#000" opacity="0.25" transform="translate(1.5 1.5)" filter="url(#scb1)"/><path d="M11 14 L8.5 22 M11.5 14 L15.5 22 M11.2 14 V20" stroke="#777" stroke-width="1"/><path d="M1.5 14.5 L14.5 1 L19 5.5 L5.5 18.5 Z" fill="#8c8c8c"/><path d="M4 2.5 L17 18" stroke="#8a8a8a" stroke-width="2"/><path d="M4 2.5 L17 18" stroke="#a5a5a5" stroke-width="0.8"/></svg>
<div class="vsep" style="left:991px;top:90px;height:24px;background:#d0d0d0"></div>
<span class="abs" style="left:999.8px;top:94.6px;font-size:8.6px;line-height:12px;color:#9c9c9c;letter-spacing:.35px">STOP</span>
<svg class="ic" style="left:1030px;top:90.8px" width="22" height="22" viewBox="0 0 22 22" ><circle cx="11" cy="11" r="9.4" fill="none" stroke="#7c7c7c" stroke-width="1.2"/><circle cx="11" cy="11" r="1.8" fill="#7c7c7c"/><path d="M11 1.5 V4 M11 18 V20.5 M1.5 11 H4 M18 11 H20.5" stroke="#7c7c7c" stroke-width="1.8"/></svg><div class="abs" style="left:8px;top:119px;width:64px;height:681px;background:#f0f0f0"></div>
<div class="hgrip" style="left:14px;top:122px;width:56px"></div>
<div class="abs" style="left:8px;top:799px;width:64px;height:1px;background:#a9a9a9"></div>
<svg class="ic" style="left:28px;top:132.5px" width="22" height="22" viewBox="0 0 22 22" ><circle cx="11" cy="11" r="9" fill="#fff" stroke="#1a1a1a" stroke-width="2.6"/><path d="M11 5.5 V11 L14.8 14.2" fill="none" stroke="#333" stroke-width="1.3"/></svg>
<div class="hsep" style="top:160px"></div>
<span class="lt" style="top:169.0px">Y+</span>
<span class="lt" style="top:188.2px">Y-</span>
<span class="lt" style="top:207.29999999999998px">M+</span>
<span class="lt" style="top:226.39999999999998px">M-</span>
<span class="lt" style="top:245.5px">D+</span>
<span class="lt" style="top:264.59999999999997px">D-</span>
<span class="lt" style="top:289.2px">SD+</span>
<span class="lt" style="top:308.3px">SD-</span>
<span class="lt" style="top:333.2px">H+</span>
<span class="lt" style="top:352.3px">H-</span>
<span class="lt" style="top:371.4px">M+</span>
<span class="lt" style="top:390.5px">M-</span>
<span class="lt" style="top:409.59999999999997px">S+</span>
<span class="lt" style="top:428.7px">S-</span>
<div class="hsep" style="top:281px"></div><div class="hsep" style="top:326px"></div><div class="hsep" style="top:446px"></div>
<div class="abs" style="left:11px;top:450px;width:58px;height:17px;background:#fff;border:1px solid #b9b9b9;border-radius:2px"></div><span class="abs" style="left:15px;top:452px;font-size:11px;line-height:13px;color:#000">1x</span><div class="abs" style="left:54px;top:451px;width:14px;height:8px;border:1px solid #c4c4c4;border-radius:1px;background:linear-gradient(#f4f4f4,#dedede)"></div><div class="abs" style="left:54px;top:458px;width:14px;height:8px;border:1px solid #c4c4c4;border-radius:1px;background:linear-gradient(#f4f4f4,#dedede)"></div><svg class="ic" style="left:54px;top:451px" width="14" height="15" viewBox="0 0 14 15" ><path d="M4.5 5.2 L7 2.6 L9.5 5.2 Z M4.5 9.8 L7 12.4 L9.5 9.8 Z" fill="#3a5a8c"/></svg>
<div class="hsep" style="top:470px"></div>
<svg class="ic" style="left:27.5px;top:475px" width="25" height="26" viewBox="0 0 25 26" ><circle cx="12.3" cy="11.3" r="9" fill="#fff" stroke="#1a1a1a" stroke-width="2.6"/><path d="M12.3 5.8 V11.3 L16 14.4" fill="none" stroke="#333" stroke-width="1.3"/><text x="12.3" y="24.5" text-anchor="middle" font-family="Liberation Sans,sans-serif" font-weight="bold" font-size="8.5" fill="#2a3a1a" stroke="#f0f0f0" stroke-width="2" paint-order="stroke" textLength="19" lengthAdjust="spacingAndGlyphs">NOW</text></svg>
<div class="hsep" style="top:505px"></div>
<svg class="ic" style="left:28.8px;top:513.3px" width="22" height="22" viewBox="0 0 22 22" ><circle cx="11" cy="11" r="9.3" fill="none" stroke="#a01c38" stroke-width="1.5"/><path d="M11 1.5 V4 M11 18 V20.5 M1.5 11 H4 M18 11 H20.5" stroke="#a01c38" stroke-width="1.2"/><path d="M8 5.8 L15.8 11 L8 16.2 Z" fill="#1f8a1f"/></svg>
<div class="hsep" style="top:541px"></div>
<svg class="ic" style="left:28.8px;top:549.4px" width="22" height="22" viewBox="0 0 22 22" ><circle cx="11" cy="11" r="9.3" fill="none" stroke="#a01c38" stroke-width="1.5"/><path d="M11 1.5 V4 M11 18 V20.5 M1.5 11 H4 M18 11 H20.5" stroke="#a01c38" stroke-width="1.2"/><path d="M5.6 6 L10.6 11 L5.6 16 Z M10.6 6 L16.6 11 L10.6 16 Z" fill="#1f8a1f"/></svg>
<svg class="ic" style="left:29px;top:580px" width="22" height="22" viewBox="0 0 22 22" ><path d="M2.2 19.8 L12 10" stroke="#111" stroke-width="4" stroke-linecap="round"/><path d="M13.5 1.5 A5.6 5.6 0 1 0 20.5 8.5 L16.3 9.8 L12.4 5.8 Z" fill="#111"/></svg>
<div class="hsep" style="top:607px"></div>
<div class="abs" style="left:11px;top:624px;width:58px;height:17px;background:#f4f4f4;border:1px solid #b9b9b9;border-radius:2px"></div><span class="abs" style="left:15px;top:626px;font-size:11px;line-height:13px;color:#9a9a9a">1x</span><div class="abs" style="left:54px;top:625px;width:14px;height:8px;border:1px solid #c4c4c4;border-radius:1px;background:linear-gradient(#f4f4f4,#dedede)"></div><div class="abs" style="left:54px;top:632px;width:14px;height:8px;border:1px solid #c4c4c4;border-radius:1px;background:linear-gradient(#f4f4f4,#dedede)"></div><svg class="ic" style="left:54px;top:625px" width="14" height="15" viewBox="0 0 14 15" ><path d="M4.5 5.2 L7 2.6 L9.5 5.2 Z M4.5 9.8 L7 12.4 L9.5 9.8 Z" fill="#aaa"/></svg><svg class="abs" style="left:72px;top:119px" width="918" height="681" viewBox="72 119 918 681" font-family="Liberation Sans, sans-serif">
<rect x="72" y="119" width="918" height="681" fill="#2a4060"/>
<defs><clipPath id="fr"><rect x="102" y="148.5" width="857.5" height="621.3"/></clipPath></defs>
<path d="M311.7 118.0 L915.0 118.0 L910.0 120.2 L893.7 131.4 L875.8 140.3 L853.5 151.5 L837.8 160.5 L824.4 171.6 L813.2 185.0 L808.8 198.4 L806.5 214.1 L802.1 229.7 L795.4 240.9 L786.4 243.1 L777.5 234.2 L768.5 223.0 L757.4 216.3 L746.2 214.1 L735.0 211.9 L723.9 216.3 L717.2 225.3 L714.9 238.7 L710.4 252.1 L706.0 261.0 L699.3 261.0 L692.6 258.8 L685.9 263.3 L681.4 274.4 L680.3 287.8 L683.6 303.0 L686.0 310.0 L669.6 316.0 L653.0 331.5 L628.6 334.0 L612.0 333.0 L587.5 341.4 L567.0 357.8 L562.8 382.5 L546.4 398.9 L542.0 398.0 L536.2 387.8 L510.0 379.0 L487.0 377.7 L476.8 370.4 L472.0 380.0 L476.5 386.7 L490.0 402.3 L501.1 415.8 L514.5 435.9 L520.1 456.0 L514.5 473.9 L501.1 487.3 L485.5 491.7 L467.6 498.4 L456.4 505.0 L443.0 514.0 L434.0 525.3 L438.5 536.4 L425.1 545.4 L411.7 540.9 L400.6 534.2 L382.0 542.6 L361.6 534.4 L337.0 530.3 L324.6 538.5 L300.5 528.9 L275.5 534.4 L256.0 548.3 L247.8 559.4 L245.0 578.9 L241.2 590.0 L238.5 605.8 L241.2 621.6 L251.7 637.4 L254.4 653.2 L249.0 666.4 L238.5 679.5 L228.0 690.0 L217.5 700.6 L207.0 713.8 L196.4 727.0 L185.9 740.0 L175.3 750.7 L157.0 761.2 L135.8 769.0 L160.0 775.0 L234.0 779.0 L250.0 800.0 L86.0 800.0 L72.0 789.0 L72.0 284.7 L103.3 281.9 L136.7 281.9 L178.3 273.5 L185.3 268.0 L186.7 229.0 L214.4 212.4 L250.5 206.9 L281.0 198.6 L292.2 159.7 L300.5 134.7 Z" fill="#344b6c"/>
<path d="M344.3 118.0 L346.0 138.5 L353.4 157.0 L374.0 159.0 L388.3 153.0 L398.5 136.5 L419.0 124.0 L429.3 118.0 Z" fill="#2a4060"/>
<path d="M319.2 418.4 L327.0 411.7 L346.0 406.4 L370.6 402.8 L393.0 405.0 L446.6 413.0 L473.4 401.9 L478.8 413.5 L487.7 426.9 L496.6 440.3 L501.1 453.7 L496.6 469.4 L487.7 478.3 L474.3 485.0 L456.4 487.3 L438.5 491.7 L425.1 498.4 L411.7 500.7 L398.3 496.2 L384.9 487.3 L367.0 485.0 L351.4 487.3 L340.2 469.4 L335.8 453.7 L324.6 435.9 Z" fill="#2a4060"/>
<path d="M630.0 118.0 L755.0 118.0 L746.2 131.4 L730.6 142.6 L719.4 158.2 L703.7 171.6 L688.1 181.7 L674.7 185.0 L661.3 176.0 L652.3 162.7 L645.6 147.0 L630.0 140.3 Z" fill="#3e5677"/>
<path d="M630.0 153.8 L641.2 156.0 L650.0 173.9 L652.3 191.7 L659.0 211.9 L656.8 234.2 L643.4 243.0 L630.0 238.7 Z" fill="#3e5677"/>
<path d="M380.0 229.0 L403.6 225.3 L423.7 229.7 L443.9 243.0 L455.0 261.0 L461.7 274.4 L440.0 278.0 L414.2 282.0 L414.2 313.5 L410.9 324.7 L406.4 344.8 L395.3 356.0 L388.5 369.4 L375.1 380.6 L361.7 387.3 L343.9 385.0 L319.3 378.3 L294.7 369.4 L272.3 360.4 L270.1 347.0 L263.4 324.7 L267.2 312.4 L272.8 290.2 L283.9 273.5 L300.5 256.9 L320.0 240.2 L342.2 227.7 L364.4 223.5 Z" fill="#3e5677"/>
<path d="M488.0 202.5 L503.6 195.8 L515.9 203.6 L517.0 223.7 L513.0 239.4 L514.1 255.0 L517.0 266.2 L532.7 268.4 L539.4 257.3 L548.3 239.4 L561.7 223.7 L575.1 212.6 L584.1 207.0 L595.3 210.3 L610.9 200.3 L626.5 188.0 L651.1 172.3 L673.5 156.7 L684.6 150.0 L730.0 150.0 L730.0 176.8 L702.5 181.3 L682.4 188.0 L664.5 198.0 L657.8 208.1 L651.1 217.0 L646.6 228.2 L642.2 239.4 L633.2 248.3 L619.8 250.6 L610.9 255.0 L604.2 266.2 L584.1 270.7 L575.1 275.1 L570.7 284.1 L557.3 293.0 L543.9 295.3 L532.7 304.2 L517.0 310.9 L505.9 313.1 L494.7 306.4 L483.5 293.0 L472.3 293.0 L461.2 297.5 L450.0 295.3 L450.0 275.1 L463.4 271.8 L476.8 261.7 L483.5 243.9 L485.8 223.7 Z" fill="#3e5677"/>
<path d="M72.0 381.0 L94.6 364.4 L135.7 380.8 L172.7 380.8 L176.8 348.0 L172.7 335.7 L222.0 360.3 L275.3 368.5 L300.0 378.0 L316.0 384.0 L314.0 405.0 L318.0 425.0 L330.0 452.0 L345.0 475.0 L352.0 490.0 L362.0 497.0 L365.0 508.0 L350.0 516.0 L331.0 517.8 L300.5 520.5 L270.0 528.9 L247.8 540.0 L228.3 551.0 L214.4 562.0 L203.3 578.9 L202.0 595.0 L192.0 608.0 L182.0 620.0 L168.0 632.0 L150.0 643.0 L138.5 648.0 L112.0 646.6 L101.6 654.5 L72.0 656.0 Z" fill="#3e5677"/>
<path d="M72.0 440.0 L97.8 440.0 L95.0 456.7 L86.7 473.3 L86.7 495.5 L72.0 503.9 Z" fill="#344b6c"/>
<path d="M301.5 582.6 L308.2 577.5 L321.8 573.3 L333.6 569.9 L336.2 563.1 L343.8 570.7 L350.5 584.3 L352.2 599.5 L348.8 614.7 L343.8 629.9 L335.3 641.8 L325.2 650.2 L316.7 648.5 L311.6 638.4 L309.9 621.5 L313.3 604.6 L308.2 592.7 Z" fill="#344b6c"/>
<path d="M70.0 220.8 L114.4 241.6 L148.9 258.6 L181.1 273.6 L213.6 288.1 L244.2 300.8 L233.9 348.0 M114.4 241.6 L125.2 218.7 L136.1 195.7 L147.1 172.5 L158.3 149.1 L185.9 166.6 L212.0 182.3 L236.7 196.3 L247.6 167.3 L258.9 137.4 L293.6 159.1 L303.3 118.0 M314.4 118.0 L343.6 136.1 L349.2 118.0 M361.7 118.0 L380.0 124.9 M363.3 119.4 L391.5 132.9 L418.8 143.7 L445.3 151.9 L440.6 190.8 L468.9 195.8 L494.0 199.2 L518.9 200.8 L557.8 199.9 L582.2 196.3 L580.0 169.7 L594.4 165.8 L591.7 145.2 L595.3 118.0 M591.7 145.2 L621.6 137.4 L652.2 126.3 L674.4 118.0 M468.9 195.8 L466.7 223.7 L464.6 250.4 L462.6 276.0 L460.7 300.7 L458.9 324.7 L457.2 348.0 M690.0 186.1 L656.4 199.1 L660.4 226.1 L664.3 252.0 L668.0 277.0 L671.6 301.2 L675.1 324.9 L678.6 348.0 M671.7 330.5 L690.0 324.9 M682.7 190.3 L700.6 181.2 L709.2 218.4 L748.6 201.3 L739.5 169.6 L768.9 153.5 L799.9 134.5 L808.1 156.5 L839.3 135.4 L848.4 156.5 L876.4 138.9 L906.1 118.9 M762.3 120.7 L772.4 152.4 M722.1 120.7 L726.6 126.8 L740.4 118.9 M669.0 280.0 L672.8 316.1 L676.2 351.0 L658.0 356.8 L663.2 384.9 M671.9 330.7 L702.5 322.0 L734.3 311.5 L737.2 322.0 L761.5 316.9 L787.0 310.8 L813.8 303.7 L824.7 336.2 L835.7 368.6 L798.6 379.0 L805.3 406.5 L771.0 414.8 L766.0 394.6 L733.2 402.3 L702.0 408.8 L696.8 380.0 L663.2 384.9 L640.0 390.1 M805.3 406.5 L812.8 433.8 L820.4 461.4 L828.2 489.4 L836.1 518.0 L844.2 547.4 L816.5 551.4 L790.0 555.0 L763.6 557.5 L738.2 559.7 L713.7 561.6 L690.0 563.3 M790.0 555.0 L794.2 578.0 M821.2 323.5 L846.2 314.2 L872.6 303.7 L900.4 292.0 L929.9 279.0 L940.3 301.9 L950.8 324.9 L961.3 348.0 L971.9 371.4 L944.3 380.4 L956.0 407.6 L990.0 397.6 M233.2 331.3 L222.2 370.4 L254.4 378.8 L284.7 386.1 L313.5 392.2 L346.1 397.9 L377.2 402.3 L404.0 407.1 L430.0 411.0 M313.5 392.2 L307.0 421.9 L300.4 451.6 L252.6 441.4 L243.9 477.7 L229.4 476.2 L222.8 499.9 L216.0 524.0 L209.1 548.7 L226.5 551.6 L219.3 580.0 M304.2 440.0 L326.5 442.9 L319.3 484.9 L309.1 484.3 L304.5 508.7 L299.9 533.6 L325.1 535.7 L331.4 507.5 L365.5 511.5 L398.3 514.8 L430.0 517.4 M90.3 534.2 L94.6 513.3 L126.6 518.1 L156.7 522.5 L185.1 526.4 L212.0 529.9 M71.4 503.8 L83.0 505.2 L80.1 533.6 L71.4 533.6 M400.0 406.7 L445.8 411.0 L447.0 400.3 L473.9 398.0 L475.9 353.0 L456.5 351.0 L455.7 340.0 M473.9 398.0 L503.4 399.3 L532.6 399.5 L561.8 398.6 L591.3 396.5 L640.6 389.3 M591.3 396.5 L593.7 427.6 L596.1 458.4 L598.6 489.3 L608.1 490.1 L611.2 526.9 L614.5 564.6 L639.1 563.6 L664.1 562.4 L689.9 560.9 M400.0 513.9 L427.1 516.7 L453.6 519.1 L452.2 549.2 L450.7 580.0 M214.9 568.0 L208.4 593.0 L201.8 618.8 L194.9 645.6 L187.7 673.5 L180.1 702.8 L206.4 702.0 L231.5 701.4 L255.5 700.8 L250.0 727.6 L244.2 755.7 L238.1 785.4 L207.2 789.7 L174.4 794.5 L139.6 799.9 M238.1 785.4 L266.0 782.6 L292.6 780.1 L318.3 777.9 L343.1 776.0 L367.1 774.4 L370.1 747.3 L373.0 721.6 L375.8 697.0 L403.3 696.2 L430.0 695.5 M367.1 774.4 L393.2 774.4 L390.3 799.9 M450.7 568.0 L448.8 595.9 L446.9 624.9 L444.9 655.0 L472.5 654.9 L499.8 654.8 L526.9 654.7 L554.0 654.5 L581.2 654.4 L582.0 671.8 L607.1 671.7 L632.5 671.7 L658.5 671.7 L685.1 671.7 L712.5 671.8 L715.8 695.1 L719.2 719.5 L722.7 744.9 L726.5 771.7 L730.4 799.9 M444.9 655.0 L437.1 655.5 L437.1 695.0 L400.0 695.5 M614.5 565.1 L616.2 590.2 L618.0 616.1 L619.8 642.9 L621.7 670.9 M791.2 555.0 L796.6 579.9 L802.1 605.5 L807.9 632.1 L836.9 631.7 L867.5 631.1 L900.0 630.5 L928.3 629.6 L958.2 628.7 L990.0 627.6" fill="none" stroke="#9adfa9" stroke-width="1.4" stroke-dasharray="1.3 2.4"/>
<g clip-path="url(#fr)"><path d="M1909.2 1296.5 L1873.1 1246.8 L1839.3 1200.2 L1807.5 1156.4 L1777.6 1115.1 L1749.3 1076.1 L1722.5 1039.2 L1697.0 1004.2 L1672.9 970.9 L1649.9 939.2 L1627.9 909.0 L1607.0 880.1 L1586.9 852.5 L1567.7 826.0 L1549.2 800.6 L1531.5 776.2 L1514.4 752.6 L1497.9 730.0 L1482.1 708.1 L1466.7 686.9 L1451.9 666.5 L1437.5 646.7 L1423.5 627.5 L1410.0 608.8 L1396.8 590.7 L1384.1 573.1 L1371.6 555.9 L1359.5 539.2 L1347.6 522.9 L1336.1 507.0 L1324.8 491.4 L1313.8 476.2 L1302.9 461.4 L1292.4 446.8 L1282.0 432.5 L1271.8 418.4 L1261.8 404.7 L1252.0 391.1 L1242.3 377.8 L1232.8 364.7 L1223.4 351.8 L1214.2 339.1 L1205.1 326.5 L1196.1 314.2 L1187.2 301.9 L1178.4 289.8 L1169.7 277.9 L1161.2 266.0 L1152.6 254.3 L1144.2 242.7 L1135.9 231.2 L1127.6 219.8 L1119.3 208.4 L1111.1 197.1 L1103.0 185.9 L1094.9 174.8 L1086.8 163.7 L1078.8 152.6 L1070.8 141.6 L1062.8 130.6 L1054.9 119.7 L1046.9 108.7 L1039.0 97.8 L1031.1 86.9 L1023.1 75.9 L1015.2 65.0 L1007.2 54.0 L999.3 43.0 L991.3 32.0 L983.2 21.0 L975.2 9.9 L967.1 -1.3 L958.9 -12.5 L950.8 -23.7 L942.5 -35.1 L934.2 -46.5 L925.9 -58.0 L917.5 -69.6 L908.9 -81.3 L900.4 -93.2 L891.7 -105.1 L882.9 -117.2 L874.0 -129.4 L865.1 -141.8 L856.0 -154.4 L846.7 -167.1 L837.4 -180.0 L827.9 -193.1 L818.2 -206.4 L808.4 -219.9 L798.4 -233.6 M1371.0 1094.8 L1355.9 1064.2 L1341.5 1034.9 L1327.7 1007.0 L1314.5 980.3 L1301.9 954.8 L1289.8 930.3 L1278.2 906.8 L1267.0 884.1 L1256.3 862.3 L1245.9 841.3 L1235.9 821.0 L1226.2 801.3 L1216.8 782.3 L1207.7 763.9 L1198.9 746.1 L1190.3 728.7 L1182.0 711.9 L1173.9 695.5 L1166.0 679.5 L1158.4 663.9 L1150.9 648.7 L1143.5 633.9 L1136.4 619.4 L1129.4 605.2 L1122.5 591.3 L1115.8 577.7 L1109.2 564.3 L1102.7 551.2 L1096.4 538.3 L1090.1 525.7 L1084.0 513.2 L1077.9 500.9 L1071.9 488.9 L1066.1 476.9 L1060.3 465.2 L1054.5 453.6 L1048.9 442.1 L1043.3 430.8 L1037.7 419.6 L1032.3 408.5 L1026.8 397.5 L1021.5 386.6 L1016.1 375.8 L1010.8 365.0 L1005.6 354.4 L1000.3 343.8 L995.1 333.2 L990.0 322.7 L984.8 312.3 L979.7 301.9 L974.6 291.5 L969.5 281.2 L964.4 270.9 L959.3 260.6 L954.2 250.3 L949.1 240.0 L944.0 229.7 L938.9 219.3 L933.8 209.0 L928.7 198.6 L923.6 188.3 L918.4 177.8 L913.3 167.3 L908.1 156.8 L902.8 146.2 L897.6 135.6 L892.3 124.9 L887.0 114.1 L881.6 103.2 L876.2 92.2 L870.7 81.1 L865.2 69.9 L859.6 58.6 L853.9 47.2 L848.2 35.6 L842.4 23.8 L836.6 12.0 L830.6 -0.1 L824.6 -12.3 L818.5 -24.7 L812.2 -37.4 L805.9 -50.2 L799.4 -63.3 L792.9 -76.6 L786.2 -90.2 L779.3 -104.0 L772.3 -118.2 L765.2 -132.6 L757.9 -147.4 L750.4 -162.6 M1088.3 1000.2 L1080.4 977.3 L1072.8 955.4 L1065.5 934.4 L1058.5 914.1 L1051.8 894.5 L1045.3 875.6 L1039.0 857.4 L1032.9 839.7 L1027.0 822.6 L1021.2 806.0 L1015.7 789.9 L1010.3 774.2 L1005.0 759.0 L999.9 744.2 L994.9 729.7 L990.0 715.6 L985.3 701.8 L980.6 688.4 L976.1 675.2 L971.6 662.3 L967.3 649.7 L963.0 637.3 L958.8 625.1 L954.7 613.2 L950.6 601.4 L946.6 589.9 L942.7 578.5 L938.9 567.3 L935.0 556.3 L931.3 545.4 L927.6 534.7 L923.9 524.0 L920.3 513.5 L916.7 503.2 L913.2 492.9 L909.6 482.7 L906.2 472.6 L902.7 462.6 L899.3 452.7 L895.9 442.8 L892.5 433.0 L889.1 423.3 L885.8 413.6 L882.4 403.9 L879.1 394.3 L875.8 384.7 L872.5 375.1 L869.2 365.6 L865.9 356.1 L862.6 346.5 L859.3 337.0 L856.1 327.5 L852.8 318.0 L849.5 308.4 L846.2 298.8 L842.9 289.2 L839.5 279.6 L836.2 269.9 L832.8 260.2 L829.5 250.4 L826.1 240.6 L822.7 230.7 L819.2 220.7 L815.7 210.7 L812.2 200.6 L808.7 190.3 L805.1 180.0 L801.5 169.6 L797.9 159.0 L794.2 148.3 L790.5 137.5 L786.7 126.6 L782.9 115.5 L779.0 104.2 L775.0 92.7 L771.0 81.1 L766.9 69.3 L762.8 57.2 L758.5 44.9 L754.2 32.4 L749.8 19.7 L745.3 6.7 L740.7 -6.6 L736.0 -20.3 L731.2 -34.2 L726.3 -48.5 L721.2 -63.1 L716.0 -78.1 L710.7 -93.6 L705.2 -109.4 M903.4 948.0 L898.9 929.2 L894.6 911.1 L890.5 893.6 L886.5 876.7 L882.6 860.3 L878.9 844.4 L875.2 829.0 L871.7 814.1 L868.2 799.6 L864.9 785.4 L861.6 771.7 L858.4 758.2 L855.3 745.2 L852.3 732.4 L849.4 719.9 L846.5 707.6 L843.6 695.7 L840.9 683.9 L838.1 672.4 L835.5 661.1 L832.8 650.0 L830.2 639.1 L827.7 628.4 L825.2 617.8 L822.7 607.4 L820.3 597.2 L817.9 587.0 L815.5 577.0 L813.2 567.2 L810.9 557.4 L808.6 547.7 L806.3 538.2 L804.1 528.7 L801.9 519.3 L799.7 510.0 L797.5 500.8 L795.3 491.6 L793.2 482.5 L791.0 473.4 L788.9 464.4 L786.7 455.4 L784.6 446.4 L782.5 437.5 L780.4 428.6 L778.3 419.7 L776.2 410.8 L774.1 402.0 L772.0 393.1 L769.9 384.2 L767.8 375.4 L765.7 366.5 L763.6 357.5 L761.5 348.6 L759.3 339.6 L757.2 330.6 L755.1 321.5 L752.9 312.4 L750.7 303.3 L748.5 294.0 L746.3 284.8 L744.1 275.4 L741.9 265.9 L739.6 256.4 L737.4 246.8 L735.0 237.0 L732.7 227.2 L730.4 217.2 L728.0 207.1 L725.5 196.9 L723.1 186.5 L720.6 176.0 L718.1 165.3 L715.5 154.5 L712.9 143.4 L710.2 132.2 L707.5 120.7 L704.7 109.0 L701.9 97.1 L699.0 85.0 L696.1 72.5 L693.1 59.8 L690.0 46.8 L686.8 33.5 L683.6 19.8 L680.3 5.7 L676.9 -8.7 L673.4 -23.5 L669.7 -38.8 L666.0 -54.6 L662.2 -70.8 M764.4 917.9 L761.9 901.3 L759.5 885.2 L757.2 869.7 L755.0 854.7 L752.8 840.1 L750.7 825.9 L748.6 812.2 L746.6 798.8 L744.7 785.7 L742.8 773.0 L740.9 760.6 L739.1 748.5 L737.3 736.7 L735.6 725.1 L733.9 713.7 L732.3 702.6 L730.6 691.7 L729.0 681.0 L727.5 670.5 L725.9 660.2 L724.4 650.0 L722.9 640.0 L721.4 630.1 L720.0 620.4 L718.5 610.8 L717.1 601.4 L715.7 592.0 L714.3 582.8 L713.0 573.6 L711.6 564.6 L710.3 555.6 L709.0 546.7 L707.6 537.9 L706.3 529.1 L705.0 520.4 L703.7 511.8 L702.5 503.2 L701.2 494.7 L699.9 486.1 L698.6 477.7 L697.4 469.2 L696.1 460.8 L694.9 452.4 L693.6 444.0 L692.4 435.6 L691.1 427.2 L689.9 418.8 L688.6 410.4 L687.3 401.9 L686.1 393.5 L684.8 385.0 L683.5 376.5 L682.3 368.0 L681.0 359.4 L679.7 350.8 L678.4 342.1 L677.1 333.3 L675.8 324.5 L674.5 315.7 L673.1 306.7 L671.8 297.7 L670.4 288.6 L669.0 279.4 L667.6 270.0 L666.2 260.6 L664.8 251.0 L663.4 241.4 L661.9 231.5 L660.4 221.6 L658.9 211.5 L657.3 201.2 L655.8 190.7 L654.2 180.1 L652.6 169.2 L650.9 158.2 L649.2 146.9 L647.5 135.4 L645.8 123.6 L644.0 111.6 L642.1 99.2 L640.2 86.6 L638.3 73.7 L636.3 60.4 L634.3 46.7 L632.2 32.7 L630.0 18.2 L627.8 3.3 L625.5 -12.1 L623.1 -28.0 L620.7 -44.4 M648.4 901.3 L647.3 885.8 L646.2 870.9 L645.1 856.4 L644.1 842.4 L643.1 828.8 L642.1 815.5 L641.2 802.7 L640.2 790.1 L639.3 777.9 L638.5 765.9 L637.6 754.2 L636.8 742.8 L636.0 731.7 L635.2 720.8 L634.4 710.0 L633.6 699.5 L632.9 689.2 L632.1 679.1 L631.4 669.1 L630.7 659.3 L630.0 649.7 L629.3 640.2 L628.6 630.8 L627.9 621.6 L627.2 612.5 L626.6 603.4 L625.9 594.5 L625.3 585.7 L624.6 577.0 L624.0 568.3 L623.4 559.7 L622.7 551.2 L622.1 542.8 L621.5 534.4 L620.9 526.0 L620.3 517.7 L619.7 509.5 L619.1 501.3 L618.5 493.1 L617.9 484.9 L617.3 476.8 L616.7 468.7 L616.1 460.5 L615.5 452.4 L614.9 444.3 L614.3 436.2 L613.7 428.1 L613.1 419.9 L612.5 411.8 L611.9 403.6 L611.3 395.4 L610.7 387.1 L610.1 378.8 L609.5 370.5 L608.9 362.1 L608.3 353.7 L607.6 345.2 L607.0 336.6 L606.4 327.9 L605.7 319.2 L605.1 310.4 L604.4 301.5 L603.8 292.4 L603.1 283.3 L602.4 274.1 L601.7 264.7 L601.0 255.2 L600.3 245.6 L599.6 235.8 L598.9 225.8 L598.1 215.7 L597.4 205.4 L596.6 194.9 L595.8 184.2 L595.0 173.3 L594.2 162.1 L593.4 150.7 L592.5 139.0 L591.7 127.1 L590.8 114.9 L589.8 102.3 L588.9 89.4 L587.9 76.2 L586.9 62.6 L585.9 48.5 L584.8 34.1 L583.7 19.2 L582.6 3.8 L581.4 -12.2 L580.2 -28.7 M542.6 894.6 L542.6 879.6 L542.6 865.1 L542.5 851.0 L542.5 837.3 L542.5 824.1 L542.4 811.2 L542.4 798.6 L542.4 786.4 L542.3 774.4 L542.3 762.8 L542.3 751.4 L542.3 740.2 L542.2 729.3 L542.2 718.7 L542.2 708.2 L542.2 697.9 L542.1 687.8 L542.1 677.9 L542.1 668.2 L542.1 658.6 L542.0 649.1 L542.0 639.8 L542.0 630.6 L542.0 621.6 L541.9 612.6 L541.9 603.8 L541.9 595.0 L541.9 586.4 L541.9 577.8 L541.8 569.3 L541.8 560.9 L541.8 552.5 L541.8 544.2 L541.8 535.9 L541.7 527.7 L541.7 519.6 L541.7 511.5 L541.7 503.4 L541.7 495.3 L541.6 487.3 L541.6 479.3 L541.6 471.3 L541.6 463.3 L541.6 455.3 L541.5 447.3 L541.5 439.3 L541.5 431.2 L541.5 423.2 L541.5 415.2 L541.4 407.1 L541.4 399.0 L541.4 390.8 L541.4 382.6 L541.4 374.4 L541.3 366.1 L541.3 357.7 L541.3 349.3 L541.3 340.8 L541.3 332.3 L541.2 323.6 L541.2 314.9 L541.2 306.0 L541.2 297.1 L541.2 288.1 L541.1 278.9 L541.1 269.6 L541.1 260.2 L541.1 250.6 L541.0 240.9 L541.0 231.0 L541.0 221.0 L541.0 210.7 L540.9 200.3 L540.9 189.6 L540.9 178.8 L540.9 167.7 L540.8 156.3 L540.8 144.7 L540.8 132.8 L540.8 120.6 L540.7 108.1 L540.7 95.3 L540.7 82.1 L540.6 68.5 L540.6 54.5 L540.6 40.0 L540.5 25.1 L540.5 9.7 L540.4 -6.2 L540.4 -22.8 M438.1 896.6 L439.1 881.4 L440.1 866.7 L441.1 852.5 L442.0 838.6 L443.0 825.2 L443.8 812.1 L444.7 799.4 L445.6 787.0 L446.4 774.9 L447.2 763.1 L448.0 751.6 L448.7 740.3 L449.5 729.3 L450.2 718.5 L450.9 707.9 L451.6 697.6 L452.3 687.4 L453.0 677.4 L453.7 667.5 L454.3 657.8 L455.0 648.3 L455.6 638.9 L456.2 629.6 L456.9 620.5 L457.5 611.4 L458.1 602.5 L458.7 593.7 L459.3 584.9 L459.8 576.3 L460.4 567.7 L461.0 559.2 L461.6 550.8 L462.1 542.4 L462.7 534.1 L463.3 525.8 L463.8 517.6 L464.4 509.4 L464.9 501.3 L465.5 493.2 L466.0 485.1 L466.6 477.0 L467.1 468.9 L467.7 460.9 L468.2 452.8 L468.8 444.8 L469.3 436.7 L469.9 428.7 L470.4 420.6 L471.0 412.5 L471.5 404.4 L472.1 396.2 L472.6 388.0 L473.2 379.8 L473.7 371.5 L474.3 363.2 L474.9 354.8 L475.5 346.3 L476.0 337.8 L476.6 329.2 L477.2 320.5 L477.8 311.7 L478.4 302.9 L479.0 293.9 L479.6 284.8 L480.2 275.6 L480.9 266.3 L481.5 256.8 L482.2 247.2 L482.8 237.5 L483.5 227.6 L484.2 217.5 L484.9 207.2 L485.6 196.8 L486.3 186.1 L487.1 175.2 L487.8 164.1 L488.6 152.7 L489.4 141.1 L490.2 129.2 L491.0 117.0 L491.9 104.5 L492.7 91.6 L493.6 78.4 L494.5 64.8 L495.5 50.8 L496.5 36.4 L497.5 21.5 L498.5 6.1 L499.6 -9.8 L500.7 -26.3 M326.3 907.9 L328.5 891.8 L330.8 876.2 L332.9 861.2 L335.0 846.6 L337.0 832.4 L338.9 818.6 L340.8 805.2 L342.7 792.2 L344.5 779.5 L346.2 767.1 L348.0 755.1 L349.6 743.2 L351.3 731.7 L352.9 720.4 L354.5 709.3 L356.0 698.5 L357.5 687.8 L359.0 677.4 L360.4 667.1 L361.9 657.0 L363.3 647.1 L364.7 637.3 L366.0 627.6 L367.4 618.1 L368.7 608.7 L370.0 599.5 L371.3 590.3 L372.6 581.3 L373.9 572.3 L375.2 563.4 L376.4 554.6 L377.7 545.9 L378.9 537.2 L380.1 528.6 L381.3 520.1 L382.5 511.6 L383.7 503.2 L384.9 494.8 L386.1 486.4 L387.3 478.1 L388.5 469.8 L389.6 461.5 L390.8 453.2 L392.0 444.9 L393.2 436.7 L394.3 428.4 L395.5 420.1 L396.7 411.8 L397.9 403.5 L399.0 395.2 L400.2 386.8 L401.4 378.5 L402.6 370.0 L403.8 361.6 L405.0 353.1 L406.2 344.5 L407.5 335.9 L408.7 327.2 L410.0 318.4 L411.2 309.5 L412.5 300.6 L413.8 291.6 L415.0 282.5 L416.4 273.2 L417.7 263.9 L419.0 254.4 L420.4 244.9 L421.8 235.1 L423.2 225.2 L424.6 215.2 L426.0 205.0 L427.5 194.6 L429.0 184.1 L430.5 173.3 L432.1 162.3 L433.7 151.1 L435.3 139.7 L437.0 128.0 L438.7 116.0 L440.4 103.7 L442.2 91.2 L444.0 78.3 L445.9 65.0 L447.9 51.4 L449.8 37.4 L451.9 23.0 L454.0 8.1 L456.2 -7.3 L458.4 -23.2 L460.8 -39.6 M196.0 930.9 L200.0 913.0 L203.9 895.7 L207.6 879.1 L211.3 862.9 L214.8 847.3 L218.2 832.1 L221.5 817.4 L224.8 803.1 L227.9 789.2 L231.0 775.7 L233.9 762.5 L236.8 749.6 L239.7 737.0 L242.4 724.7 L245.2 712.7 L247.8 700.9 L250.4 689.4 L253.0 678.1 L255.5 667.0 L257.9 656.1 L260.3 645.4 L262.7 634.9 L265.0 624.5 L267.3 614.3 L269.6 604.2 L271.8 594.3 L274.1 584.5 L276.2 574.8 L278.4 565.3 L280.5 555.8 L282.6 546.4 L284.7 537.2 L286.8 528.0 L288.9 518.8 L290.9 509.8 L292.9 500.8 L294.9 491.9 L296.9 483.0 L298.9 474.2 L300.9 465.4 L302.9 456.6 L304.9 447.9 L306.8 439.2 L308.8 430.5 L310.7 421.8 L312.7 413.2 L314.6 404.5 L316.6 395.8 L318.5 387.2 L320.5 378.5 L322.5 369.8 L324.4 361.0 L326.4 352.3 L328.4 343.5 L330.4 334.6 L332.4 325.7 L334.4 316.8 L336.4 307.8 L338.5 298.7 L340.5 289.6 L342.6 280.4 L344.7 271.1 L346.8 261.7 L349.0 252.2 L351.1 242.6 L353.3 232.9 L355.5 223.1 L357.8 213.1 L360.1 203.0 L362.4 192.8 L364.7 182.4 L367.1 171.8 L369.5 161.1 L372.0 150.1 L374.5 139.0 L377.1 127.6 L379.7 116.1 L382.3 104.2 L385.0 92.2 L387.8 79.8 L390.7 67.2 L393.6 54.2 L396.6 40.9 L399.7 27.3 L402.8 13.3 L406.1 -1.1 L409.4 -15.9 L412.9 -31.2 L416.4 -46.9 L420.1 -63.2 M28.6 971.7 L35.5 950.6 L42.1 930.3 L48.5 910.7 L54.7 891.8 L60.6 873.5 L66.4 855.9 L72.0 838.8 L77.4 822.3 L82.6 806.3 L87.7 790.7 L92.7 775.5 L97.5 760.8 L102.1 746.5 L106.7 732.5 L111.2 718.8 L115.5 705.5 L119.8 692.5 L123.9 679.7 L128.0 667.2 L132.0 655.0 L135.9 643.0 L139.8 631.3 L143.6 619.7 L147.3 608.3 L150.9 597.1 L154.5 586.1 L158.1 575.3 L161.6 564.6 L165.0 554.0 L168.4 543.6 L171.8 533.3 L175.1 523.2 L178.4 513.1 L181.6 503.1 L184.9 493.3 L188.1 483.5 L191.2 473.8 L194.4 464.1 L197.5 454.6 L200.6 445.1 L203.7 435.6 L206.8 426.2 L209.8 416.8 L212.9 407.5 L215.9 398.2 L219.0 388.9 L222.0 379.6 L225.0 370.4 L228.0 361.1 L231.0 351.9 L234.1 342.7 L237.1 333.4 L240.1 324.1 L243.2 314.8 L246.2 305.5 L249.3 296.1 L252.3 286.7 L255.4 277.3 L258.5 267.8 L261.6 258.2 L264.8 248.6 L267.9 238.9 L271.1 229.2 L274.4 219.3 L277.6 209.4 L280.9 199.3 L284.2 189.2 L287.6 178.9 L290.9 168.5 L294.4 158.0 L297.9 147.4 L301.4 136.5 L305.0 125.6 L308.6 114.4 L312.3 103.1 L316.1 91.6 L319.9 79.9 L323.8 67.9 L327.8 55.7 L331.9 43.3 L336.0 30.6 L340.2 17.7 L344.6 4.4 L349.0 -9.2 L353.5 -23.1 L358.2 -37.3 L363.0 -52.0 L367.9 -67.0 L373.0 -82.5 L378.2 -98.4 M-215.3 1045.0 L-202.7 1017.7 L-190.6 991.6 L-179.1 966.6 L-168.1 942.6 L-157.5 919.6 L-147.3 897.5 L-137.5 876.2 L-128.0 855.7 L-118.9 835.9 L-110.0 816.7 L-101.5 798.2 L-93.2 780.2 L-85.2 762.8 L-77.4 745.9 L-69.8 729.5 L-62.4 713.5 L-55.3 698.0 L-48.3 682.8 L-41.5 668.0 L-34.8 653.6 L-28.3 639.5 L-21.9 625.6 L-15.7 612.1 L-9.6 598.9 L-3.6 585.9 L2.3 573.1 L8.1 560.6 L13.7 548.3 L19.3 536.2 L24.8 524.3 L30.2 512.6 L35.6 501.0 L40.8 489.6 L46.0 478.3 L51.1 467.2 L56.2 456.2 L61.2 445.3 L66.2 434.6 L71.1 423.9 L76.0 413.3 L80.8 402.8 L85.6 392.4 L90.4 382.1 L95.1 371.8 L99.8 361.6 L104.5 351.4 L109.2 341.3 L113.8 331.3 L118.5 321.2 L123.1 311.2 L127.7 301.2 L132.3 291.2 L136.9 281.3 L141.5 271.3 L146.1 261.3 L150.7 251.3 L155.3 241.3 L159.9 231.3 L164.6 221.3 L169.2 211.2 L173.9 201.0 L178.6 190.9 L183.3 180.6 L188.0 170.3 L192.8 160.0 L197.6 149.5 L202.5 139.0 L207.4 128.4 L212.3 117.7 L217.3 106.9 L222.3 96.0 L227.4 84.9 L232.6 73.8 L237.8 62.4 L243.1 51.0 L248.4 39.4 L253.9 27.6 L259.4 15.6 L265.0 3.4 L270.7 -9.0 L276.5 -21.6 L282.4 -34.4 L288.5 -47.5 L294.6 -60.8 L300.9 -74.5 L307.3 -88.4 L313.9 -102.6 L320.6 -117.2 L327.5 -132.1 L334.5 -147.4 M-642.6 1191.9 L-615.5 1151.0 L-589.9 1112.4 L-565.7 1075.9 L-542.7 1041.3 L-520.9 1008.4 L-500.2 977.1 L-480.4 947.2 L-461.5 918.7 L-443.4 891.4 L-426.1 865.3 L-409.5 840.2 L-393.5 816.1 L-378.1 792.9 L-363.3 770.6 L-349.0 749.1 L-335.3 728.2 L-321.9 708.1 L-309.0 688.6 L-296.5 669.7 L-284.3 651.4 L-272.5 633.6 L-261.1 616.3 L-249.9 599.4 L-239.0 583.0 L-228.4 567.0 L-218.0 551.4 L-207.9 536.1 L-198.0 521.2 L-188.4 506.6 L-178.9 492.3 L-169.6 478.3 L-160.5 464.5 L-151.5 451.0 L-142.7 437.8 L-134.1 424.7 L-125.6 411.9 L-117.2 399.2 L-108.9 386.8 L-100.8 374.5 L-92.8 362.4 L-84.8 350.4 L-77.0 338.6 L-69.2 326.9 L-61.6 315.3 L-54.0 303.9 L-46.5 292.5 L-39.0 281.2 L-31.6 270.1 L-24.2 259.0 L-16.9 248.0 L-9.7 237.0 L-2.5 226.1 L4.7 215.3 L11.9 204.5 L19.0 193.8 L26.1 183.0 L33.2 172.3 L40.3 161.6 L47.3 151.0 L54.4 140.3 L61.5 129.7 L68.6 119.0 L75.6 108.3 L82.7 97.6 L89.8 86.9 L97.0 76.1 L104.2 65.3 L111.3 54.4 L118.6 43.5 L125.9 32.5 L133.2 21.5 L140.5 10.4 L148.0 -0.8 L155.5 -12.1 L163.0 -23.5 L170.6 -35.0 L178.3 -46.7 L186.1 -58.4 L194.0 -70.3 L202.0 -82.3 L210.1 -94.5 L218.2 -106.9 L226.5 -119.4 L235.0 -132.1 L243.5 -145.0 L252.2 -158.2 L261.1 -171.5 L270.1 -185.1 L279.3 -199.0 L288.7 -213.1 M2192.3 1016.2 L2043.4 987.5 L1916.6 963.2 L1807.4 942.5 L1712.0 924.6 L1627.9 909.0 L1553.2 895.3 L1486.2 883.2 L1425.8 872.4 L1370.9 862.7 L1320.7 854.0 L1274.6 846.1 L1232.1 839.0 L1192.6 832.5 L1155.9 826.6 L1121.6 821.1 L1089.4 816.1 L1059.1 811.6 L1030.4 807.3 L1003.3 803.4 L977.6 799.8 L953.0 796.5 L929.6 793.4 L907.1 790.6 L885.6 787.9 L864.9 785.4 L844.9 783.2 L825.6 781.0 L806.9 779.1 L788.8 777.2 L771.1 775.6 L754.0 774.0 L737.2 772.6 L720.9 771.2 L704.8 770.0 L689.1 768.9 L673.6 767.9 L658.4 767.0 L643.4 766.2 L628.6 765.4 L614.0 764.8 L599.5 764.2 L585.1 763.7 L570.7 763.3 L556.5 763.0 L542.3 762.8 L528.1 762.6 L514.0 762.5 L499.8 762.5 L485.5 762.6 L471.2 762.7 L456.8 762.9 L442.3 763.2 L427.7 763.6 L412.9 764.1 L397.9 764.6 L382.7 765.3 L367.3 766.0 L351.5 766.8 L335.5 767.8 L319.2 768.8 L302.5 769.9 L285.3 771.2 L267.7 772.5 L249.6 774.0 L231.0 775.7 L211.7 777.4 L191.8 779.3 L171.1 781.4 L149.6 783.7 L127.2 786.1 L103.9 788.8 L79.4 791.7 L53.8 794.8 L26.7 798.2 L-1.8 801.9 L-31.9 805.9 L-64.0 810.3 L-98.1 815.0 L-134.6 820.3 L-173.9 826.0 L-216.1 832.3 L-261.9 839.3 L-311.7 847.1 L-366.2 855.7 L-426.1 865.3 L-492.4 876.1 L-566.4 888.3 L-649.5 902.3 L-743.7 918.2 L-851.5 936.7 L-976.3 958.4 L-1122.8 984.0 L-1297.2 1014.7 L-1509.0 1052.4 L-1771.8 1099.4 M1605.9 446.2 L1538.1 457.4 L1477.1 467.4 L1421.7 476.2 L1371.1 484.2 L1324.8 491.4 L1282.1 498.0 L1242.5 503.9 L1205.8 509.4 L1171.5 514.3 L1139.4 518.9 L1109.2 523.1 L1080.8 526.9 L1053.9 530.5 L1028.5 533.7 L1004.3 536.8 L981.2 539.6 L959.2 542.2 L938.1 544.6 L917.9 546.9 L898.5 549.0 L879.7 550.9 L861.7 552.7 L844.2 554.4 L827.3 556.0 L810.9 557.4 L794.9 558.7 L779.4 560.0 L764.3 561.1 L749.5 562.2 L735.1 563.1 L720.9 564.0 L707.0 564.8 L693.4 565.6 L680.0 566.2 L666.8 566.8 L653.8 567.3 L640.9 567.8 L628.2 568.2 L615.6 568.5 L603.1 568.8 L590.8 569.0 L578.4 569.2 L566.2 569.3 L554.0 569.3 L541.8 569.3 L529.7 569.2 L517.5 569.1 L505.4 568.9 L493.2 568.6 L481.0 568.3 L468.7 568.0 L456.3 567.6 L443.8 567.1 L431.3 566.5 L418.6 565.9 L405.8 565.3 L392.8 564.5 L379.6 563.7 L366.2 562.8 L352.6 561.9 L338.8 560.8 L324.7 559.7 L310.3 558.5 L295.6 557.2 L280.5 555.8 L265.1 554.3 L249.2 552.7 L232.9 551.0 L216.1 549.2 L198.7 547.2 L180.7 545.1 L162.1 542.9 L142.8 540.4 L122.8 537.9 L101.8 535.1 L80.0 532.1 L57.1 528.9 L33.1 525.5 L7.8 521.8 L-18.8 517.8 L-47.0 513.5 L-76.8 508.9 L-108.6 503.8 L-142.5 498.3 L-178.9 492.3 L-218.0 485.7 L-260.1 478.6 L-305.9 470.6 L-355.8 461.9 L-410.4 452.1 L-470.6 441.3 L-537.3 429.1 L-611.8 415.4 L-695.6 399.7 L-790.7 381.8 M1436.5 281.6 L1386.7 298.5 L1340.9 313.8 L1298.8 327.6 L1259.7 340.3 L1223.4 351.8 L1189.5 362.4 L1157.8 372.1 L1128.0 381.1 L1100.0 389.3 L1073.5 397.0 L1048.3 404.0 L1024.4 410.6 L1001.7 416.7 L980.0 422.4 L959.2 427.7 L939.4 432.6 L920.2 437.2 L901.8 441.4 L884.1 445.4 L867.0 449.2 L850.4 452.6 L834.4 455.9 L818.8 458.9 L803.6 461.7 L788.9 464.4 L774.5 466.8 L760.4 469.1 L746.7 471.2 L733.3 473.2 L720.1 475.0 L707.2 476.6 L694.4 478.2 L681.9 479.6 L669.6 480.8 L657.4 482.0 L645.4 483.0 L633.5 483.9 L621.8 484.7 L610.1 485.4 L598.6 486.0 L587.1 486.4 L575.6 486.8 L564.3 487.1 L552.9 487.2 L541.6 487.3 L530.4 487.2 L519.1 487.1 L507.8 486.9 L496.4 486.5 L485.1 486.1 L473.7 485.5 L462.2 484.8 L450.7 484.1 L439.0 483.2 L427.3 482.2 L415.5 481.1 L403.5 479.9 L391.4 478.6 L379.1 477.1 L366.6 475.5 L353.9 473.8 L341.1 471.9 L327.9 469.9 L314.6 467.7 L300.9 465.4 L286.9 462.9 L272.6 460.2 L258.0 457.3 L242.9 454.3 L227.5 451.0 L211.5 447.5 L195.1 443.8 L178.1 439.8 L160.5 435.5 L142.3 431.0 L123.3 426.1 L103.6 420.9 L83.0 415.3 L61.6 409.3 L39.1 402.8 L15.4 395.9 L-9.4 388.5 L-35.6 380.4 L-63.4 371.8 L-92.8 362.4 L-124.1 352.2 L-157.5 341.2 L-193.3 329.1 L-231.7 316.0 L-273.3 301.5 L-318.3 285.6 L-367.4 268.1 L-421.0 248.6 L-480.2 226.9 L-545.6 202.5 M1299.3 148.2 L1262.0 167.7 L1227.3 185.6 L1194.9 202.1 L1164.5 217.2 L1135.9 231.2 L1108.9 244.1 L1083.3 256.1 L1059.1 267.3 L1036.1 277.6 L1014.1 287.3 L993.1 296.3 L973.1 304.6 L953.9 312.5 L935.4 319.8 L917.6 326.7 L900.4 333.1 L883.9 339.1 L867.9 344.7 L852.3 350.0 L837.3 355.0 L822.7 359.6 L808.4 363.9 L794.5 368.0 L781.0 371.8 L767.8 375.4 L754.9 378.7 L742.2 381.8 L729.8 384.6 L717.6 387.3 L705.6 389.8 L693.8 392.1 L682.2 394.2 L670.8 396.1 L659.5 397.8 L648.3 399.4 L637.3 400.9 L626.3 402.1 L615.5 403.3 L604.8 404.2 L594.1 405.1 L583.5 405.7 L572.9 406.3 L562.4 406.7 L551.9 406.9 L541.4 407.1 L531.0 407.1 L520.5 406.9 L510.1 406.6 L499.6 406.2 L489.1 405.6 L478.6 404.9 L468.0 404.1 L457.3 403.1 L446.6 401.9 L435.8 400.6 L424.9 399.2 L413.9 397.6 L402.8 395.8 L391.5 393.9 L380.1 391.8 L368.6 389.5 L356.9 387.0 L345.0 384.4 L332.8 381.5 L320.5 378.5 L307.9 375.2 L295.1 371.7 L282.0 367.9 L268.5 363.9 L254.8 359.7 L240.7 355.1 L226.2 350.3 L211.2 345.1 L195.9 339.6 L180.0 333.7 L163.6 327.5 L146.7 320.8 L129.1 313.7 L110.8 306.1 L91.8 298.0 L72.0 289.3 L51.3 280.0 L29.7 270.1 L6.9 259.4 L-16.9 248.0 L-42.1 235.6 L-68.7 222.4 L-96.9 208.0 L-126.8 192.5 L-158.7 175.6 L-192.8 157.3 L-229.4 137.3 L-268.8 115.5 L-311.4 91.5 L-357.7 65.1 M1179.2 31.4 L1151.5 51.8 L1125.4 70.6 L1100.7 88.2 L1077.2 104.5 L1054.9 119.7 L1033.6 133.9 L1013.3 147.1 L993.8 159.5 L975.1 171.1 L957.2 182.0 L939.9 192.2 L923.2 201.8 L907.1 210.8 L891.6 219.2 L876.5 227.2 L861.9 234.7 L847.8 241.7 L834.0 248.3 L820.6 254.5 L807.5 260.4 L794.7 265.9 L782.2 271.1 L770.0 275.9 L758.1 280.5 L746.3 284.8 L734.8 288.7 L723.6 292.5 L712.4 296.0 L701.5 299.2 L690.7 302.2 L680.1 305.0 L669.6 307.6 L659.3 309.9 L649.0 312.1 L638.9 314.0 L628.9 315.8 L618.9 317.4 L609.0 318.8 L599.2 320.0 L589.4 321.0 L579.7 321.9 L570.1 322.6 L560.4 323.1 L550.8 323.4 L541.2 323.6 L531.7 323.6 L522.1 323.5 L512.5 323.1 L502.9 322.6 L493.3 322.0 L483.7 321.1 L474.0 320.1 L464.2 319.0 L454.5 317.6 L444.6 316.1 L434.7 314.3 L424.7 312.4 L414.6 310.3 L404.4 308.0 L394.1 305.5 L383.7 302.7 L373.1 299.8 L362.4 296.6 L351.6 293.2 L340.5 289.6 L329.3 285.7 L317.9 281.5 L306.3 277.1 L294.5 272.4 L282.4 267.3 L270.0 262.0 L257.4 256.3 L244.5 250.3 L231.2 243.9 L217.6 237.1 L203.5 229.8 L189.1 222.2 L174.3 214.0 L158.9 205.3 L143.1 196.1 L126.7 186.3 L109.6 175.9 L92.0 164.8 L73.6 152.9 L54.4 140.3 L34.4 126.8 L13.5 112.4 L-8.5 96.9 L-31.5 80.4 L-55.8 62.6 L-81.4 43.4 L-108.5 22.8 L-137.3 0.5 L-167.9 -23.7 L-200.6 -49.9 M1066.9 -77.8 L1047.0 -57.9 L1027.9 -39.4 L1009.6 -21.9 L992.1 -5.5 L975.2 9.9 L958.9 24.4 L943.2 38.0 L928.0 50.9 L913.3 63.0 L899.0 74.5 L885.2 85.3 L871.7 95.5 L858.7 105.2 L845.9 114.3 L833.5 122.9 L821.4 131.1 L809.6 138.7 L798.0 146.0 L786.7 152.9 L775.6 159.3 L764.7 165.4 L754.0 171.2 L743.6 176.6 L733.2 181.7 L723.1 186.5 L713.1 191.0 L703.2 195.3 L693.5 199.2 L683.9 202.9 L674.4 206.3 L665.1 209.5 L655.8 212.4 L646.6 215.1 L637.5 217.6 L628.5 219.8 L619.5 221.9 L610.7 223.7 L601.8 225.3 L593.0 226.7 L584.3 227.9 L575.6 228.9 L566.9 229.8 L558.3 230.4 L549.6 230.8 L541.0 231.0 L532.4 231.0 L523.8 230.9 L515.2 230.5 L506.6 230.0 L497.9 229.2 L489.3 228.3 L480.6 227.2 L471.9 225.8 L463.1 224.3 L454.3 222.6 L445.5 220.6 L436.6 218.4 L427.6 216.1 L418.6 213.5 L409.4 210.6 L400.2 207.5 L390.9 204.2 L381.5 200.7 L372.0 196.9 L362.4 192.8 L352.6 188.4 L342.7 183.8 L332.7 178.9 L322.5 173.6 L312.1 168.0 L301.5 162.1 L290.8 155.9 L279.8 149.3 L268.7 142.3 L257.2 134.8 L245.6 127.0 L233.6 118.7 L221.4 109.9 L208.9 100.7 L196.0 90.9 L182.8 80.5 L169.2 69.5 L155.2 57.9 L140.8 45.6 L125.9 32.5 L110.4 18.7 L94.5 4.0 L77.9 -11.6 L60.7 -28.1 L42.8 -45.8 L24.2 -64.5 L4.7 -84.5 L-15.6 -105.9 L-36.9 -128.8 L-59.3 -153.2 M955.0 -186.5 L941.6 -168.5 L928.6 -151.3 L916.0 -135.1 L903.7 -119.7 L891.7 -105.1 L880.0 -91.3 L868.6 -78.1 L857.4 -65.6 L846.5 -53.7 L835.8 -42.4 L825.3 -31.6 L815.1 -21.4 L805.0 -11.7 L795.1 -2.5 L785.4 6.3 L775.9 14.6 L766.5 22.5 L757.3 30.0 L748.2 37.1 L739.2 43.9 L730.4 50.3 L721.6 56.3 L713.0 62.0 L704.5 67.4 L696.1 72.5 L687.8 77.3 L679.5 81.8 L671.4 86.0 L663.3 90.0 L655.3 93.7 L647.4 97.1 L639.5 100.3 L631.7 103.2 L623.9 105.9 L616.2 108.3 L608.5 110.6 L600.9 112.6 L593.3 114.3 L585.7 115.9 L578.2 117.2 L570.7 118.3 L563.2 119.2 L555.7 119.9 L548.2 120.4 L540.8 120.6 L533.3 120.7 L525.9 120.5 L518.4 120.2 L510.9 119.6 L503.5 118.8 L496.0 117.8 L488.5 116.6 L481.0 115.1 L473.5 113.5 L465.9 111.6 L458.3 109.5 L450.7 107.2 L443.0 104.6 L435.3 101.8 L427.5 98.8 L419.7 95.5 L411.8 92.0 L403.9 88.2 L395.9 84.1 L387.8 79.8 L379.7 75.2 L371.5 70.3 L363.2 65.1 L354.8 59.6 L346.3 53.8 L337.7 47.6 L328.9 41.1 L320.1 34.3 L311.1 27.0 L302.1 19.4 L292.8 11.4 L283.5 3.0 L273.9 -5.9 L264.2 -15.3 L254.4 -25.1 L244.3 -35.4 L234.0 -46.3 L223.6 -57.7 L212.9 -69.7 L202.0 -82.3 L190.8 -95.6 L179.4 -109.6 L167.7 -124.3 L155.7 -139.8 L143.3 -156.2 L130.7 -173.4 L117.7 -191.6 L104.3 -210.7 L90.4 -230.9 L76.2 -252.3" fill="none" stroke="#19232e" stroke-width="1.0"/>
<path d="M1835.9 669.8 L1739.8 669.0 L1655.1 668.2 L1579.9 667.6 L1512.6 667.0 L1451.9 666.5 L1396.7 666.0 L1346.4 665.6 L1300.2 665.2 L1257.6 664.8 L1218.2 664.4 L1181.5 664.1 L1147.2 663.8 L1115.1 663.5 L1084.9 663.3 L1056.4 663.0 L1029.4 662.8 L1003.8 662.6 L979.5 662.4 L956.3 662.2 L934.1 662.0 L912.8 661.8 L892.4 661.6 L872.7 661.4 L853.8 661.3 L835.5 661.1 L817.7 661.0 L800.5 660.8 L783.8 660.7 L767.5 660.5 L751.6 660.4 L736.1 660.3 L720.9 660.1 L706.0 660.0 L691.4 659.9 L677.0 659.7 L662.9 659.6 L649.0 659.5 L635.2 659.4 L621.6 659.3 L608.1 659.2 L594.8 659.0 L581.5 658.9 L568.3 658.8 L555.2 658.7 L542.1 658.6 L529.0 658.5 L515.9 658.4 L502.8 658.2 L489.7 658.1 L476.5 658.0 L463.2 657.9 L449.9 657.8 L436.4 657.7 L422.8 657.5 L409.1 657.4 L395.1 657.3 L381.0 657.2 L366.7 657.1 L352.1 656.9 L337.3 656.8 L322.1 656.7 L306.7 656.5 L290.8 656.4 L274.6 656.3 L257.9 656.1 L240.8 656.0 L223.1 655.8 L204.8 655.7 L185.9 655.5 L166.4 655.3 L146.0 655.1 L124.9 655.0 L102.8 654.8 L79.7 654.6 L55.5 654.4 L30.1 654.1 L3.3 653.9 L-25.0 653.7 L-55.0 653.4 L-86.9 653.1 L-120.9 652.8 L-157.3 652.5 L-196.4 652.2 L-238.6 651.8 L-284.3 651.4 L-334.1 651.0 L-388.6 650.5 L-448.7 650.0 L-515.2 649.4 L-589.4 648.8 L-672.8 648.0 L-767.4 647.2 L-875.8 646.3 L-1001.5 645.2 L-1149.0 643.9" fill="none" stroke="#19232e" stroke-width="3"/></g>
<rect x="102" y="148.5" width="857.5" height="621.3" fill="none" stroke="#19232e" stroke-width="1.2"/>
<rect x="941" y="511" width="15" height="257" fill="#fff" opacity=".07"/><rect x="941" y="606" width="15" height="65" fill="#fff" opacity=".05"/><rect x="941" y="606" width="15" height="32" fill="#fff" opacity=".05"/>
<path d="M460.0 118.0 L460.0 175.0 M424.4 264.0 L430.8 293.5 M434.0 309.7 L440.0 365.0 M359.0 248.0 L411.0 254.0 M370.0 152.0 L352.5 228.0 M347.5 252.0 L335.0 306.0 M339.0 318.0 L434.0 370.0 M103.0 282.0 L140.0 311.5 M150.0 322.0 L197.8 384.0 M437.0 292.0 L435.5 295.5 M440.5 290.0 L441.0 297.0 M523.6 234.7 L522.2 237.5 M519.7 248.0 L524.4 252.0 M535.5 252.0 L555.5 251.0 M570.3 248.0 L571.7 247.2 M563.9 259.7 L562.5 290.0 M557.0 306.0 L548.0 315.8 M541.0 330.5 L540.5 363.0 M595.0 219.0 L610.5 192.4 M619.0 176.0 L628.0 160.0 M622.0 223.8 L642.5 222.0 M614.7 242.4 L616.0 262.4 M617.8 282.0 L621.0 298.5 M579.4 238.0 L587.0 234.7 M602.2 226.9 L608.3 226.3 M767.0 190.8 L783.0 243.5 M795.5 256.0 L856.7 278.0 M870.5 273.0 L884.4 246.0 M890.0 227.7 L892.8 211.6 M875.5 282.4 L965.0 290.8 M977.0 282.0 L990.0 227.0 M981.7 348.0 L983.6 316.6 M983.0 288.0 L990.0 286.6 M208.9 398.6 L241.7 425.8 M87.0 396.0 L119.4 415.5 M78.0 399.4 L72.0 420.8 M134.4 427.0 L185.3 475.0 M200.0 474.4 L221.4 453.5 M233.9 441.9 L242.0 436.9 M256.7 432.7 L260.0 435.8 M185.3 486.3 L169.4 502.0 M283.9 469.7 L261.7 503.5 M258.9 521.6 L268.6 549.4 M275.5 566.0 L279.7 573.0 M297.8 575.8 L328.0 565.0 M341.7 569.7 L353.5 590.0 M540.5 363.3 L547.0 380.8 M555.5 389.7 L560.5 388.8 M391.0 410.5 L453.6 455.0 M467.5 468.8 L480.5 485.5 M358.5 466.0 L460.9 510.7 M497.5 511.0 L498.5 515.0 M513.3 532.7 L531.4 542.4 M547.5 546.9 L588.3 544.0 M531.4 553.5 L513.3 570.0 M665.5 427.0 L657.8 462.0 M648.0 475.0 L639.7 480.0 M676.7 419.7 L690.0 422.4 M601.4 553.0 L603.0 560.5 M674.4 571.6 L690.0 567.4 M429.4 567.4 L434.0 575.5 M731.0 354.0 L773.3 370.8 M690.0 422.4 L753.3 435.5 M770.5 441.0 L794.0 452.0 M799.7 459.0 L803.3 466.0 M873.3 362.4 L878.3 348.0 M877.5 377.0 L888.6 386.9 M893.6 400.8 L876.7 486.0 M871.0 503.5 L853.9 553.0 M706.0 566.0 L731.7 574.4 M941.4 578.0 L989.4 563.0 M982.0 348.0 L980.0 362.0 M183.9 581.0 L192.0 596.0 M197.0 613.6 L192.0 721.0 M182.5 733.0 L150.0 741.0 M132.5 739.0 L72.0 704.4 M286.0 593.0 L302.8 667.4 M365.8 595.0 L380.0 594.0 M353.3 604.4 L332.5 650.8 M335.3 669.7 L352.8 720.0 M300.0 686.3 L269.4 760.0 M276.0 766.3 L350.5 747.0 M358.9 792.0 L356.0 800.0 M380.0 594.0 L425.8 592.4 M435.5 578.0 L435.5 586.0 M427.8 612.7 L424.4 625.0 M418.9 635.8 L413.3 638.6 M513.9 585.0 L526.7 597.0 M665.8 585.0 L665.8 610.0 M674.0 621.0 L701.5 626.0 M446.7 690.0 L449.4 690.0 M431.4 696.0 L423.0 705.8 M391.7 710.0 L409.0 712.0 M466.7 696.0 L505.0 721.9 M517.5 735.0 L541.0 793.0 M588.3 759.0 L595.3 758.6 M613.3 757.0 L685.5 755.8 M577.2 769.7 L575.8 778.0 M565.5 792.4 L552.0 798.8 M734.4 585.0 L730.3 596.0 M720.0 612.7 L715.5 619.7 M715.5 637.7 L720.0 646.9 M732.2 661.9 L775.5 687.0 M790.0 698.8 L885.8 786.9 M848.5 573.0 L823.9 621.0 M827.5 623.8 L865.5 603.5 M883.0 596.0 L897.8 591.3 M916.4 586.9 L945.0 578.8 M902.5 790.5 L980.0 774.7 M699.7 766.9 L710.8 800.0" fill="none" stroke="#a3d5ea" stroke-width="1.5"/>
<circle cx="245" cy="238" r="4.5" fill="none" stroke="#d3c11e" stroke-width="2.0" stroke-dasharray="2.8 1.9"/>
<circle cx="406" cy="298.6" r="4.5" fill="none" stroke="#d3c11e" stroke-width="2.0" stroke-dasharray="2.8 1.9"/>
<circle cx="663.9" cy="281.6" r="4.5" fill="none" stroke="#d3c11e" stroke-width="2.0" stroke-dasharray="2.8 1.9"/>
<circle cx="674.4" cy="121" r="4.5" fill="none" stroke="#d3c11e" stroke-width="2.0" stroke-dasharray="2.8 1.9"/>
<circle cx="594.4" cy="237" r="15" fill="none" stroke="#d3c11e" stroke-width="2.1" stroke-dasharray="4.2 2.6"/>
<circle cx="287" cy="422.7" r="4.5" fill="none" stroke="#d3c11e" stroke-width="2.0" stroke-dasharray="2.8 1.9"/>
<circle cx="161.7" cy="544" r="4.5" fill="none" stroke="#d3c11e" stroke-width="2.0" stroke-dasharray="2.8 1.9"/>
<circle cx="193.9" cy="547.4" r="4.5" fill="none" stroke="#d3c11e" stroke-width="2.0" stroke-dasharray="2.8 1.9"/>
<circle cx="337.5" cy="560.8" r="5.5" fill="none" stroke="#d3c11e" stroke-width="2.0" stroke-dasharray="2.8 1.9"/>
<circle cx="368.8" cy="513.2" r="18.3" fill="none" stroke="#d3c11e" stroke-width="2.1" stroke-dasharray="4.2 2.6"/>
<circle cx="563.3" cy="453.5" r="9" fill="none" stroke="#d3c11e" stroke-width="2.1" stroke-dasharray="4.2 2.6"/>
<circle cx="488.4" cy="518.8" r="28.6" fill="none" stroke="#d3c11e" stroke-width="2.1" stroke-dasharray="4.2 2.6"/>
<circle cx="160.8" cy="588.3" r="4.5" fill="none" stroke="#d3c11e" stroke-width="2.0" stroke-dasharray="2.8 1.9"/>
<circle cx="178.9" cy="589" r="4.5" fill="none" stroke="#d3c11e" stroke-width="2.0" stroke-dasharray="2.8 1.9"/>
<circle cx="153.9" cy="600.8" r="4.5" fill="none" stroke="#d3c11e" stroke-width="2.0" stroke-dasharray="2.8 1.9"/>
<circle cx="173.9" cy="600" r="4.5" fill="none" stroke="#d3c11e" stroke-width="2.0" stroke-dasharray="2.8 1.9"/>
<circle cx="152.2" cy="715" r="4.5" fill="none" stroke="#d3c11e" stroke-width="2.0" stroke-dasharray="2.8 1.9"/>
<circle cx="318" cy="668.8" r="10" fill="none" stroke="#d3c11e" stroke-width="2.1" stroke-dasharray="4.2 2.6"/>
<circle cx="313.9" cy="704.4" r="4.5" fill="none" stroke="#d3c11e" stroke-width="2.0" stroke-dasharray="2.8 1.9"/>
<ellipse cx="912.8" cy="190" rx="15" ry="5" fill="none" stroke="#a82c20" stroke-width="1.7" transform="rotate(4 912.8 190)"/>
<path d="M704 315 L691.5 311.3 M704 316 L690.5 316.5 M704 317 L692 322.5" stroke="#e6eef5" stroke-width="1.1" fill="none"/>
<ellipse cx="563.3" cy="453.5" rx="6" ry="4.3" fill="#fff" transform="rotate(-10 563.3 453.5)"/>
<path d="M530 355.5 L536 350 L542 348.5 L540 352.5 L534 356.5 Z" fill="#6d6d6d"/>
<circle cx="313.3" cy="714.7" r="2" fill="#8a8a8a"/>
<g fill="#fff" stroke="#2a4060" stroke-width="0.6" stroke-opacity=".6"><circle cx="422.2" cy="254.7" r="11"/><circle cx="284.4" cy="583" r="10"/><circle cx="360.8" cy="744.7" r="10"/><circle cx="469.7" cy="514" r="9"/><circle cx="867" cy="281.9" r="6.5"/><circle cx="383" cy="403.7" r="6.5"/><circle cx="316.7" cy="668.8" r="6.5"/><circle cx="349.7" cy="243" r="6"/><circle cx="82.8" cy="271" r="6"/><circle cx="590.8" cy="227.7" r="6"/><circle cx="622.8" cy="307.7" r="6"/><circle cx="192.8" cy="481" r="6"/><circle cx="357" cy="595.2" r="6"/><circle cx="732" cy="264.7" r="5.5"/><circle cx="763" cy="436.9" r="5.5"/><circle cx="303.9" cy="676.6" r="5.5"/><circle cx="267" cy="768.8" r="5.5"/><circle cx="585.8" cy="629.7" r="5.5"/><circle cx="332.8" cy="314" r="5"/><circle cx="542.8" cy="323" r="5"/><circle cx="708.9" cy="315.8" r="5"/><circle cx="330" cy="660" r="5"/><circle cx="665.8" cy="620" r="5"/><circle cx="382.8" cy="710" r="5"/><circle cx="441.7" cy="375" r="4.7"/><circle cx="550" cy="391" r="4.7"/><circle cx="310" cy="720.8" r="4.5"/><circle cx="442.8" cy="280.8" r="4"/><circle cx="432.8" cy="302.7" r="4"/><circle cx="565" cy="250.8" r="4"/><circle cx="615.8" cy="185" r="4"/><circle cx="735.8" cy="336" r="4"/><circle cx="202.8" cy="392.7" r="4"/><circle cx="248.9" cy="431.9" r="4"/><circle cx="349.7" cy="462.7" r="4"/><circle cx="797.8" cy="454.4" r="4"/><circle cx="538.9" cy="547.7" r="3.9"/><circle cx="485.5" cy="492.7" r="3.6"/><circle cx="209.7" cy="301.6" r="3.5"/><circle cx="763.9" cy="181.9" r="3.5"/><circle cx="974.7" cy="291.9" r="3.5"/><circle cx="81" cy="391.6" r="3.5"/><circle cx="268.9" cy="435.8" r="3.5"/><circle cx="158.9" cy="511.9" r="3.5"/><circle cx="337.5" cy="561.9" r="3.5"/><circle cx="668" cy="418.8" r="3.5"/><circle cx="875" cy="495" r="3.5"/><circle cx="356" cy="730" r="3.5"/><circle cx="435.8" cy="592.4" r="3.5"/><circle cx="579.7" cy="760.8" r="3.5"/><circle cx="710.8" cy="627.7" r="3.5"/><circle cx="892.8" cy="792.7" r="3.5"/><circle cx="370.8" cy="145.8" r="3"/><circle cx="352" cy="301.6" r="3"/><circle cx="90.8" cy="324.7" r="3"/><circle cx="440" cy="304.7" r="3"/><circle cx="526.7" cy="253" r="3"/><circle cx="631.7" cy="188.8" r="3"/><circle cx="632.8" cy="153" r="3"/><circle cx="616.7" cy="271.6" r="3"/><circle cx="562.8" cy="300" r="3"/><circle cx="629" cy="325.8" r="3"/><circle cx="888.9" cy="238" r="3"/><circle cx="127.8" cy="420.8" r="3"/><circle cx="500.8" cy="521.9" r="3"/><circle cx="483.3" cy="518.8" r="3"/><circle cx="781.7" cy="375" r="3"/><circle cx="344.4" cy="681.9" r="3"/><circle cx="191.7" cy="730.8" r="3"/><circle cx="432" cy="605" r="3"/><circle cx="422" cy="633.8" r="3"/><circle cx="533.6" cy="603.8" r="3"/><circle cx="437.8" cy="690" r="3"/><circle cx="458.9" cy="690.8" r="3"/><circle cx="604.7" cy="757.7" r="3"/><circle cx="724.7" cy="656.9" r="3"/><circle cx="820" cy="630.8" r="3"/><circle cx="695" cy="755.8" r="3"/><circle cx="988.6" cy="773.8" r="3"/><circle cx="607" cy="570.8" r="2.8"/><circle cx="530" cy="226.6" r="2.5"/><circle cx="582.8" cy="246.6" r="2.5"/><circle cx="613.9" cy="225.8" r="2.5"/><circle cx="651.7" cy="220.8" r="2.5"/><circle cx="480.8" cy="308.8" r="2.5"/><circle cx="747" cy="164.7" r="2.5"/><circle cx="823.9" cy="164.7" r="2.5"/><circle cx="786.7" cy="252.7" r="2.5"/><circle cx="968" cy="258.8" r="2.5"/><circle cx="227.8" cy="448.8" r="2.5"/><circle cx="283.6" cy="373.8" r="2.5"/><circle cx="270.8" cy="558.8" r="2.5"/><circle cx="567" cy="388" r="2.5"/><circle cx="461.7" cy="460.8" r="2.5"/><circle cx="530.8" cy="469.7" r="2.5"/><circle cx="426.7" cy="535.8" r="2.5"/><circle cx="598" cy="543.8" r="2.5"/><circle cx="632.8" cy="485.8" r="2.5"/><circle cx="612.8" cy="575.8" r="2.5"/><circle cx="722.8" cy="351.3" r="2.5"/><circle cx="980" cy="370.8" r="2.5"/><circle cx="851.9" cy="561.9" r="2.5"/><circle cx="308" cy="683.8" r="2.5"/><circle cx="140.8" cy="744" r="2.5"/><circle cx="590.8" cy="654.7" r="2.5"/><circle cx="417.8" cy="712.7" r="2.5"/><circle cx="512.8" cy="726.9" r="2.5"/><circle cx="873.9" cy="598.8" r="2.5"/><circle cx="100" cy="279.7" r="2.4"/><circle cx="295.8" cy="435" r="2.4"/><circle cx="655" cy="325.8" r="2.3"/><circle cx="984.4" cy="306.9" r="2.3"/><circle cx="332.5" cy="566.9" r="2.3"/><circle cx="337" cy="741.9" r="2.3"/><circle cx="374" cy="750.8" r="2.3"/><circle cx="512.8" cy="227" r="2.2"/><circle cx="517.8" cy="245.8" r="2.2"/><circle cx="573.9" cy="245.8" r="2.2"/><circle cx="540.8" cy="359" r="2.2"/><circle cx="490.8" cy="463.3" r="2.2"/><circle cx="492.8" cy="468" r="2.2"/><circle cx="496" cy="506" r="2.2"/><circle cx="463.9" cy="546.9" r="2.2"/><circle cx="776.9" cy="570.8" r="2.2"/><circle cx="697.8" cy="563.8" r="2.2"/><circle cx="350.6" cy="232.7" r="2"/><circle cx="349.7" cy="318.6" r="2"/><circle cx="147" cy="317.7" r="2"/><circle cx="460" cy="183.8" r="2"/><circle cx="678.9" cy="200.8" r="2"/><circle cx="618.9" cy="319.7" r="2"/><circle cx="639.7" cy="315.8" r="2"/><circle cx="515.8" cy="318.6" r="2"/><circle cx="895" cy="202.7" r="2"/><circle cx="327.8" cy="401.6" r="2"/><circle cx="311.7" cy="465" r="2"/><circle cx="129.7" cy="503.8" r="2"/><circle cx="163.9" cy="508.8" r="2"/><circle cx="268.9" cy="508.8" r="2"/><circle cx="256.7" cy="513" r="2"/><circle cx="178.9" cy="573.8" r="2"/><circle cx="403.6" cy="366.9" r="2"/><circle cx="657" cy="353.6" r="2"/><circle cx="670" cy="401.6" r="2"/><circle cx="680" cy="413.8" r="2"/><circle cx="609.7" cy="410.8" r="2"/><circle cx="420.8" cy="467.7" r="2"/><circle cx="412" cy="518.3" r="2"/><circle cx="468" cy="566.9" r="2"/><circle cx="435.8" cy="575" r="2"/><circle cx="803.9" cy="468" r="2"/><circle cx="870.8" cy="371.9" r="2"/><circle cx="895.8" cy="392.7" r="2"/><circle cx="915.8" cy="426" r="2"/><circle cx="739.4" cy="577" r="2"/><circle cx="197.8" cy="605" r="2"/><circle cx="110" cy="626" r="2"/><circle cx="318.9" cy="614.7" r="2"/><circle cx="355" cy="660.8" r="2"/><circle cx="247" cy="690.8" r="2"/><circle cx="552.8" cy="686.9" r="2"/><circle cx="504.7" cy="735.8" r="2"/><circle cx="607.8" cy="709.7" r="2"/><circle cx="843.9" cy="625.8" r="2"/><circle cx="357" cy="302.7" r="1.8"/><circle cx="411" cy="308" r="1.7"/><circle cx="881.7" cy="338" r="1.7"/><circle cx="872.8" cy="119" r="1.7"/><circle cx="376.4" cy="372" r="1.7"/><circle cx="290" cy="461.3" r="1.7"/><circle cx="339" cy="565.5" r="1.7"/><circle cx="133.9" cy="561.9" r="1.7"/><circle cx="488.3" cy="521.9" r="1.7"/><circle cx="473.9" cy="528" r="1.7"/><circle cx="427.8" cy="564.7" r="1.7"/><circle cx="507.8" cy="575.8" r="1.7"/><circle cx="950.5" cy="390" r="1.7"/><circle cx="348" cy="626" r="1.7"/><circle cx="312.5" cy="708.8" r="1.7"/><circle cx="360.8" cy="789.7" r="1.7"/><circle cx="412" cy="640.8" r="1.7"/><circle cx="573.9" cy="788" r="1.7"/><circle cx="725.5" cy="605" r="1.7"/><circle cx="907.8" cy="589.7" r="1.7"/><circle cx="901" cy="798.8" r="1.7"/><circle cx="584" cy="232" r="1.6"/><circle cx="161.7" cy="544" r="1.6"/><circle cx="315.8" cy="178.6" r="1.5"/><circle cx="238.9" cy="187.7" r="1.5"/><circle cx="183.9" cy="227.7" r="1.5"/><circle cx="82.8" cy="234.7" r="1.5"/><circle cx="267" cy="209.7" r="1.4"/><circle cx="241.7" cy="228.6" r="1.4"/><circle cx="267.8" cy="233.6" r="1.4"/><circle cx="483.9" cy="194.4" r="1.4"/><circle cx="445" cy="202.4" r="1.4"/><circle cx="507" cy="263.5" r="1.4"/><circle cx="601.7" cy="215" r="1.4"/><circle cx="612" cy="148.8" r="1.4"/><circle cx="600" cy="288.8" r="1.4"/><circle cx="418.9" cy="325" r="1.4"/><circle cx="398" cy="330" r="1.4"/><circle cx="441.7" cy="333.5" r="1.4"/><circle cx="456.7" cy="339.7" r="1.4"/><circle cx="533.6" cy="130" r="1.4"/><circle cx="578" cy="130" r="1.4"/><circle cx="803.9" cy="197.7" r="1.4"/><circle cx="793.9" cy="204.7" r="1.4"/><circle cx="840" cy="196.9" r="1.4"/><circle cx="773.9" cy="225.8" r="1.4"/><circle cx="773.9" cy="245.8" r="1.4"/><circle cx="781.7" cy="263.6" r="1.4"/><circle cx="711" cy="253" r="1.4"/><circle cx="732.8" cy="309.7" r="1.4"/><circle cx="707" cy="139.7" r="1.4"/><circle cx="314.7" cy="413.8" r="1.4"/><circle cx="330.8" cy="429.7" r="1.4"/><circle cx="290" cy="465.8" r="1.4"/><circle cx="372" cy="460" r="1.4"/><circle cx="260.8" cy="494.7" r="1.4"/><circle cx="240" cy="530" r="1.4"/><circle cx="308.9" cy="533.6" r="1.4"/><circle cx="77" cy="460" r="1.4"/><circle cx="84.7" cy="355.8" r="1.4"/><circle cx="334.7" cy="501.6" r="1.4"/><circle cx="368.9" cy="494.4" r="1.4"/><circle cx="401.7" cy="360.5" r="1.4"/><circle cx="408.9" cy="373.8" r="1.4"/><circle cx="389" cy="353.6" r="1.4"/><circle cx="609.7" cy="367.7" r="1.4"/><circle cx="643.9" cy="355" r="1.4"/><circle cx="650" cy="381.9" r="1.4"/><circle cx="503.6" cy="428" r="1.4"/><circle cx="389" cy="460.8" r="1.4"/><circle cx="507.8" cy="481.9" r="1.4"/><circle cx="440.5" cy="492.7" r="1.4"/><circle cx="408.9" cy="491.9" r="1.4"/><circle cx="402" cy="516.6" r="1.4"/><circle cx="435.8" cy="530.8" r="1.4"/><circle cx="482.8" cy="543.3" r="1.4"/><circle cx="624.7" cy="475.8" r="1.4"/><circle cx="563.9" cy="559.7" r="1.4"/><circle cx="753" cy="415.5" r="1.4"/><circle cx="783.9" cy="430.8" r="1.4"/><circle cx="797.8" cy="483" r="1.4"/><circle cx="279.7" cy="636.6" r="1.4"/><circle cx="305.8" cy="641.9" r="1.4"/><circle cx="351" cy="638.6" r="1.4"/><circle cx="378" cy="629" r="1.4"/><circle cx="333.9" cy="667.4" r="1.4"/><circle cx="145.8" cy="669.7" r="1.4"/><circle cx="185.8" cy="690.8" r="1.4"/><circle cx="200.8" cy="733.8" r="1.4"/><circle cx="232.8" cy="769.7" r="1.4"/><circle cx="298.3" cy="736.9" r="1.4"/><circle cx="316" cy="736.9" r="1.4"/><circle cx="220.8" cy="784.4" r="1.4"/><circle cx="627.8" cy="626.6" r="1.4"/><circle cx="469.7" cy="657.7" r="1.4"/><circle cx="645.8" cy="671" r="1.4"/><circle cx="645.8" cy="751.9" r="1.4"/><circle cx="505.8" cy="764.7" r="1.4"/><circle cx="396" cy="731.6" r="1.4"/><circle cx="446" cy="789.7" r="1.4"/><circle cx="392.8" cy="795.5" r="1.4"/><circle cx="899.7" cy="705.8" r="1.4"/><circle cx="744.7" cy="796.9" r="1.4"/><circle cx="79.7" cy="317" r="1.3"/><circle cx="579.7" cy="169.7" r="1.2"/><circle cx="881.7" cy="130" r="1.2"/><circle cx="152.2" cy="714.4" r="1.2"/><circle cx="609.7" cy="478.5" r="1.1"/><circle cx="600" cy="557" r="1.1"/><circle cx="765.8" cy="443.8" r="1.1"/><circle cx="273" cy="161" r="0.75"/><circle cx="158" cy="197" r="0.75"/><circle cx="145" cy="239" r="0.75"/><circle cx="257.5" cy="215" r="0.75"/><circle cx="261" cy="259" r="0.75"/><circle cx="262.5" cy="275" r="0.75"/><circle cx="323" cy="298" r="0.75"/><circle cx="77" cy="192" r="0.75"/><circle cx="334" cy="137.4" r="0.75"/><circle cx="428" cy="506.6" r="0.75"/><circle cx="410.2" cy="477.5" r="0.75"/><circle cx="502.9" cy="472.4" r="0.75"/><circle cx="499.6" cy="441.1" r="0.75"/><circle cx="557.7" cy="442.2" r="0.75"/><circle cx="447" cy="554" r="0.75"/><circle cx="429.2" cy="554.4" r="0.75"/><circle cx="396.8" cy="566.3" r="0.75"/><circle cx="397.9" cy="578.5" r="0.75"/><circle cx="425.8" cy="586.4" r="0.75"/><circle cx="459.3" cy="586.4" r="0.75"/><circle cx="532" cy="585.3" r="0.75"/><circle cx="513" cy="589.3" r="0.75"/><circle cx="570.4" cy="603.1" r="0.75"/><circle cx="532" cy="609.4" r="0.75"/><circle cx="656" cy="471.3" r="0.75"/><circle cx="491" cy="573" r="0.75"/><circle cx="511.8" cy="574.7" r="0.75"/></g>
<circle cx="354.7" cy="491.9" r="10" fill="#a8bffc" stroke="#fff" stroke-width="1.2"/>
<text x="89.5" y="290.5" font-size="14" fill="#b3b9c3">Castor</text>
<text x="357" y="264" font-size="14" fill="#b3b9c3">Menkalin</text>
<text x="432" y="278" font-size="14" fill="#b3b9c3">Capella</text>
<text x="599.4" y="248.5" font-size="14" fill="#b3b9c3">Mirfak</text>
<text x="576" y="272" font-size="14" fill="#eef1f5">Mel20</text>
<text x="632" y="329" font-size="14" fill="#b3b9c3">Algol</text>
<text x="899" y="215.8" font-size="14" fill="#eef1f5">M31</text>
<text x="739" y="284.7" font-size="14" fill="#b3b9c3">Almach</text>
<text x="875.5" y="302.7" font-size="14" fill="#b3b9c3">Mirach</text>
<text x="87.2" y="410.5" font-size="14" fill="#b3b9c3">Wasat</text>
<text x="208.9" y="411.3" font-size="14" fill="#b3b9c3">Mebsuta</text>
<text x="200.5" y="501.6" font-size="14" fill="#b3b9c3">Alhena</text>
<text x="353.3" y="551.3" font-size="14" fill="#eef1f5">Cr65</text>
<text x="391.7" y="424.4" font-size="14" fill="#b3b9c3">Elnath</text>
<text x="507.2" y="378.5" font-size="14" fill="#eef1f5">NGC1499</text>
<text x="546.7" y="376.6" font-size="14" fill="#b3b9c3">Menkib</text>
<text x="557.2" y="410.5" font-size="14" fill="#b3b9c3">Atik</text>
<text x="550" y="483.3" font-size="14" fill="#eef1f5">M45</text>
<text x="565.5" y="473" font-size="14" fill="#b3b9c3">Alcyone</text>
<text x="574.4" y="471.6" font-size="14" fill="#b3b9c3">Electra</text>
<text x="479.2" y="535.5" font-size="14" fill="#b3b9c3">Aldebaran</text>
<text x="469.4" y="567.4" font-size="14" fill="#eef1f5">Mel25</text>
<text x="771.4" y="457.7" font-size="14" fill="#b3b9c3">Hamal</text>
<text x="805" y="475" font-size="14" fill="#b3b9c3">Sheratan</text>
<text x="322.2" y="586.3" font-size="14" fill="#eef1f5">Cr69</text>
<text x="295.5" y="604.4" font-size="14" fill="#b3b9c3">Betelgeuse</text>
<text x="365.8" y="617" font-size="14" fill="#b3b9c3">Bellatrix</text>
<text x="338" y="679.4" font-size="14" fill="#b3b9c3">Mintaka</text>
<text x="325" y="689" font-size="14" fill="#b3b9c3">Alnilam</text>
<text x="303.3" y="699.7" font-size="14" fill="#eef1f5">Cr70</text>
<text x="300" y="740.5" font-size="14" fill="#eef1f5">M42</text>
<text x="275.5" y="789.7" font-size="14" fill="#b3b9c3">Saiph</text>
<text x="371.4" y="767" font-size="14" fill="#b3b9c3">Rigel</text>
<text x="673.6" y="639.7" font-size="14" fill="#b3b9c3">Menkar</text>
<text x="390.5" y="729.4" font-size="14" fill="#b3b9c3">Cursa</text>
<text x="518" y="744.7" font-size="14" fill="#b3b9c3">Beid</text>
<text x="700.5" y="773.8" font-size="14" fill="#b3b9c3">Azha</text>
<text x="327.5" y="276" font-size="16" font-weight="bold" font-style="italic" fill="#edb73a">Aur</text>
<text x="591" y="307" font-size="16" font-weight="bold" font-style="italic" fill="#edb73a">Per</text>
<text x="922" y="225.8" font-size="16" font-weight="bold" font-style="italic" fill="#edb73a">And</text>
<text x="130.5" y="416" font-size="16" font-weight="bold" font-style="italic" fill="#edb73a">Gem</text>
<text x="470.8" y="506.9" font-size="16" font-weight="bold" font-style="italic" fill="#edb73a">Tau</text>
<text x="754.4" y="363.3" font-size="16" font-weight="bold" font-style="italic" fill="#edb73a">Tri</text>
<text x="708" y="480.5" font-size="16" font-weight="bold" font-style="italic" fill="#edb73a">Ari</text>
<text x="353.9" y="633" font-size="16" font-weight="bold" font-style="italic" fill="#edb73a">Ori</text>
<text x="887.8" y="740.5" font-size="16" font-weight="bold" font-style="italic" fill="#edb73a">Cet</text>
<text x="715" y="334" font-size="11.7" font-weight="bold" fill="#fff">C/2014 Q2 (Lovejoy)</text>
<text x="335.3" y="518.3" font-size="15" font-weight="bold" fill="#fff">Moon</text>
<text x="592.5" y="647.4" font-size="12" font-weight="bold" fill="#fff">(6) Hebe</text>
<text x="82" y="159.2" font-size="16" font-weight="bold" fill="#fff" textLength="103" lengthAdjust="spacingAndGlyphs">34ms 29.4 fps</text>
<g font-size="10.7" fill="#a9b1bd"><text x="211" y="133.2" text-anchor="middle">07h 20m</text><text x="307.5" y="133.2" text-anchor="middle">06h 40m</text><text x="378" y="133.2" text-anchor="middle">06h</text><text x="437.5" y="133.2" text-anchor="middle">05h 20m</text><text x="490" y="133.2" text-anchor="middle">04h 40m</text><text x="540" y="133.2" text-anchor="middle">04h</text><text x="591" y="133.2" text-anchor="middle">03h 20m</text><text x="644" y="133.2" text-anchor="middle">02h 40m</text><text x="706" y="133.2" text-anchor="middle">02h</text><text x="784" y="133.2" text-anchor="middle">01h 20m</text><text x="889" y="133.2" text-anchor="middle">00h 40m</text><text x="87" y="795" text-anchor="middle">06h 40m</text><text x="225" y="795" text-anchor="middle">06h</text><text x="339.5" y="795" text-anchor="middle">05h 20m</text><text x="444" y="795" text-anchor="middle">04h 40m</text><text x="542" y="795" text-anchor="middle">04h</text><text x="640" y="795" text-anchor="middle">03h 20m</text><text x="746" y="795" text-anchor="middle">02h 40m</text><text x="868" y="795" text-anchor="middle">02h</text><text x="76.5" y="155">+40°</text><text x="76.5" y="293.4">+30°</text><text x="76.5" y="416.4">+20°</text><text x="76.5" y="535.3">+10°</text><text x="76.5" y="658.4">+00°</text><text x="76.5" y="797">-10°</text><text x="964.4" y="166.4">+40°</text><text x="964.4" y="302.5">+30°</text><text x="964.4" y="424.8">+20°</text><text x="964.4" y="542.3">+10°</text><text x="964.4" y="667.3">+00°</text></g>
</svg><div class="abs" style="left:989px;top:119px;width:259px;height:681px;background:#f0f0f0"></div>
<div class="abs" style="left:993px;top:120px;width:255px;height:19px;background:#dadada;border:1px solid #bcbcbc"></div>
<span class="abs" style="left:997.5px;top:123.5px;font-size:11px;letter-spacing:-.35px;line-height:14px;color:#000">Sidebar</span>
<svg class="ic" style="left:1219px;top:125.5px" width="8" height="9" viewBox="0 0 8 9" ><rect x="2.5" y="0.8" width="5" height="4.6" fill="none" stroke="#000" stroke-width="1"/><path d="M2.5 1.3 H7.5" stroke="#000" stroke-width="1.6"/><rect x="0.5" y="3.6" width="5" height="4.8" fill="#dadada" stroke="#000" stroke-width="1"/><path d="M0.5 4.1 H5.5" stroke="#000" stroke-width="1.6"/></svg>
<svg class="ic" style="left:1234.5px;top:125.5px" width="9" height="9" viewBox="0 0 9 9" ><path d="M0.8 0.8 L8 8 M8 0.8 L0.8 8" stroke="#000" stroke-width="1.5"/></svg>
<div class="abs" style="left:996px;top:144px;width:249px;height:653px;border:1px solid #a9a9a9;background:#f0f0f0"></div>
<div class="abs" style="left:997px;top:145px;width:247px;height:21px;border:1px solid #000;border-radius:5px;background:linear-gradient(180deg,#b4b4ff,#a2a2fb 60%,#9a9af6);font-weight:bold;font-size:11.5px;letter-spacing:.2px;line-height:19px;padding-left:4.5px;white-space:pre">Object information</div>
<div class="abs" style="left:997px;top:167px;width:247px;height:60px;overflow:hidden">
<div class="sbtn" style="left:5px;top:7px;width:132px">Go to information dialog...</div>
<div class="sbtn" style="left:143px;top:7px;width:73px">Go to object</div>
<div class="sbtn" style="left:222px;top:7px;width:60px;text-align:left;padding-left:5px">Add</div>
</div>
<div class="abs" style="left:1001px;top:201.5px;width:13px;height:13px;border:1px solid #c0c0c0;background:#f4f4f4"></div>
<span class="abs" style="left:1019px;top:201px;font-size:11px;line-height:14px;color:#8d8d8d">Autoupdate</span>
<div class="abs" style="left:997px;top:220px;width:247px;height:397px;background:#fff;border-top:1px solid #8c8c8c;border-left:1px solid #a0a0a0"></div>
<div class="abs" style="left:998px;top:221px;width:246px;height:21px;background:linear-gradient(180deg,#fff 0,#fff 45%,#f3f4f6 50%,#f7f8fa 100%);border-bottom:1px solid #d8d8d8"></div>
<div class="abs" style="left:1144px;top:221px;width:1px;height:21px;background:#dedede"></div>
<span class="abs" style="left:1002px;top:225.5px;font-size:11px;line-height:14px">Label</span><span class="abs" style="left:1149.5px;top:225.5px;font-size:11px;line-height:14px">Value</span>
<div class="abs" style="left:997px;top:617px;width:247px;height:17px;background:#efefef"></div>
<div class="abs" style="left:1015px;top:618px;width:173px;height:15px;border:1px solid #9a9a9a;border-radius:2px;background:linear-gradient(180deg,#f2f2f2 0,#e6e6e6 45%,#d2d2d2 50%,#cfcfcf 100%)"></div>
<svg class="ic" style="left:1001px;top:621px" width="8" height="9" viewBox="0 0 8 9" ><path d="M6.5 0.5 L1.5 4.5 L6.5 8.5 Z" fill="#333"/></svg>
<svg class="ic" style="left:1232px;top:621px" width="8" height="9" viewBox="0 0 8 9" ><path d="M1.5 0.5 L6.5 4.5 L1.5 8.5 Z" fill="#333"/></svg>
<svg class="ic" style="left:1097px;top:622px" width="9" height="8" viewBox="0 0 9 8" ><path d="M1.5 0 V7 M4.5 0 V7 M7.5 0 V7" stroke="#444" stroke-width="1"/></svg>
<div class="sbtab" style="top:641px">DSS Images</div>
<div class="sbtab" style="top:668px">Event information</div>
<div class="sbtab" style="top:695px">Lunar features</div>
<div class="sbtab" style="top:722px">Shape editor</div>
<div class="sbtab" style="top:749px">Constellation editor</div>
<div class="sbtab" style="top:776px">Help</div><div class="abs" style="left:8px;top:800px;width:1240px;height:20px;background:#f0f0f0"></div>
<span class="st" id="cal-s0" style="left:15.8px;letter-spacing:-0.312px">Andromeda</span>
<span class="st" id="cal-s1" style="left:133.0px;letter-spacing:0.14px">Date : 30.1.2015</span>
<span class="st" id="cal-s2" style="left:257.2px;letter-spacing:-0.211px">Time : 18:47:39 UTC</span>
<span class="st" id="cal-s3" style="left:391.8px;letter-spacing:-0.005px">FOV : +90° 00' 00"</span>
<span class="st" id="cal-s4" style="left:502.8px;letter-spacing:-0.11px">R.A. : 00h 18m 47.4s</span>
<span class="st" id="cal-s5" style="left:627.0px;letter-spacing:0.111px">Dec. : +42° 50' 20"</span>
<span class="st" id="cal-s6" style="left:745.0px;letter-spacing:0.079px">Azm. : +270° 44' 29"</span>
<span class="st" id="cal-s7" style="left:878.2px;letter-spacing:0.166px">Alt. : +58° 32' 25"</span>
<span class="st" id="cal-s8" style="left:997.0px;letter-spacing:-0.044px">Star : 5.5 mag. / DSO 5.5 mag.</span>
<span class="st" id="cal-s9" style="left:1172px;letter-spacing:0px">Sep : 43° 02' 46.1"</span>
<div class="ssep" style="left:121px"></div>
<div class="ssep" style="left:227.5px"></div>
<div class="ssep" style="left:383.5px"></div>
<div class="ssep" style="left:489.7px"></div>
<div class="ssep" style="left:615px"></div>
<div class="ssep" style="left:731.3px"></div>
<div class="ssep" style="left:857.7px"></div>
<div class="ssep" style="left:983.2px"></div>
<div class="ssep" style="left:1159.7px"></div></div></div></div>
</body></html>
